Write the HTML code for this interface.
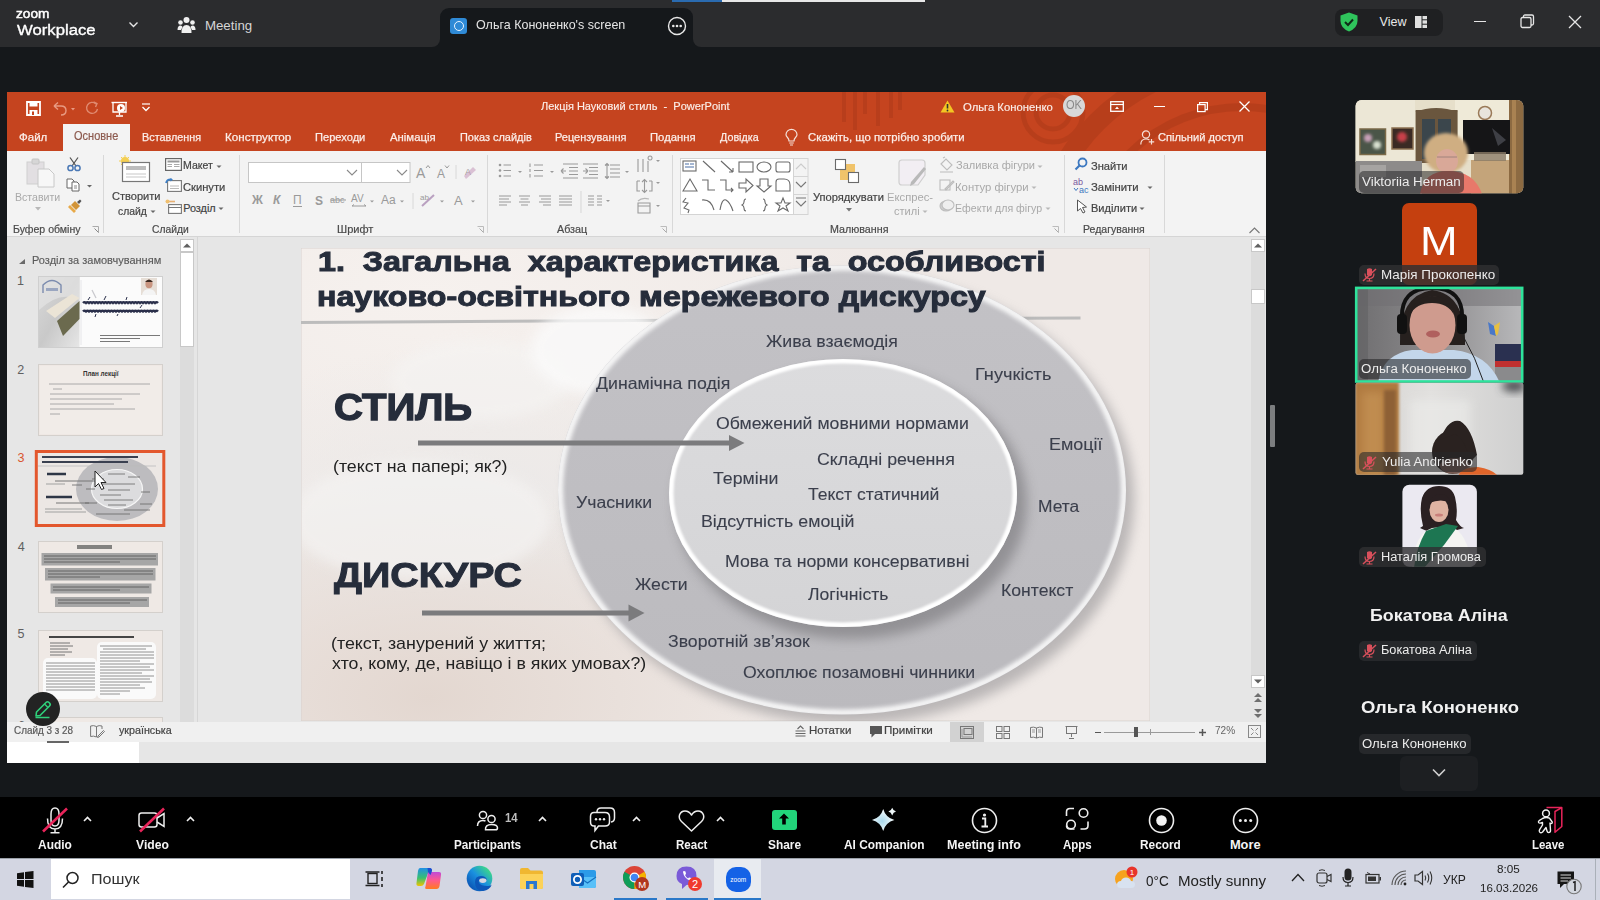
<!DOCTYPE html>
<html><head><meta charset="utf-8">
<style>
*{box-sizing:border-box;margin:0;padding:0}
html,body{width:1600px;height:900px;overflow:hidden;background:#15181b;font-family:"Liberation Sans",sans-serif;position:relative}
.a{position:absolute}
.t{position:absolute;white-space:nowrap;line-height:1;transform-origin:0 0}
svg{position:absolute;overflow:visible}
</style></head>
<body>
<div class="a" style="left:0;top:0;width:1600px;height:47px;background:#2b2c2e"></div>
<div class="a" style="left:672px;top:0;width:50px;height:2px;background:#2a6bb0"></div>
<div class="a" style="left:722px;top:0;width:203px;height:2px;background:#e8e8e8"></div>
<svg style="left:128px;top:20px" width="11" height="9" viewBox="0 0 11 9"><path d="M1.5 2.5 L5.5 6.5 L9.5 2.5" fill="none" stroke="#e6e6e6" stroke-width="1.4"/></svg>
<svg style="left:177px;top:16px" width="19" height="18" viewBox="0 0 19 18"><circle cx="9.5" cy="4" r="3" fill="#f0f0f0"/><circle cx="3.5" cy="6.5" r="2.3" fill="#f0f0f0"/><circle cx="15.5" cy="6.5" r="2.3" fill="#f0f0f0"/><path d="M4.5 17 Q4.5 9 9.5 9 Q14.5 9 14.5 17Z" fill="#f0f0f0"/><path d="M0.5 14 Q0.5 9.5 3.5 9.5 Q5 9.5 5.5 11 L4 14Z" fill="#f0f0f0"/><path d="M18.5 14 Q18.5 9.5 15.5 9.5 Q14 9.5 13.5 11 L15 14Z" fill="#f0f0f0"/></svg>
<div class="a" style="left:440px;top:8px;width:253px;height:39px;background:#15181b;border-radius:9px 9px 0 0"></div>
<div class="a" style="left:432px;top:39px;width:8px;height:8px;background:#15181b"></div>
<div class="a" style="left:424px;top:31px;width:16px;height:16px;background:#2b2c2e;border-radius:0 0 8px 0"></div>
<div class="a" style="left:693px;top:39px;width:8px;height:8px;background:#15181b"></div>
<div class="a" style="left:693px;top:31px;width:16px;height:16px;background:#2b2c2e;border-radius:0 0 0 8px"></div>
<div class="a" style="left:450px;top:18px;width:17px;height:16px;background:#2f8ad6;border-radius:3px"></div>
<div class="a" style="left:453.5px;top:21px;width:10px;height:10px;border:1.5px solid #eaf4ff;border-radius:50%"></div>
<svg style="left:667px;top:16px" width="20" height="20" viewBox="0 0 20 20"><circle cx="10" cy="10" r="8.5" fill="none" stroke="#e8e8e8" stroke-width="1.4"/><circle cx="6.3" cy="10" r="1.3" fill="#e8e8e8"/><circle cx="10" cy="10" r="1.3" fill="#e8e8e8"/><circle cx="13.7" cy="10" r="1.3" fill="#e8e8e8"/></svg>
<div class="a" style="left:1335px;top:9px;width:108px;height:27px;background:#1f2022;border-radius:8px"></div>
<svg style="left:1340px;top:12px" width="18" height="20" viewBox="0 0 18 20"><path d="M9 0.5 L17.5 3.5 L17.5 9 Q17.5 16 9 19.5 Q0.5 16 0.5 9 L0.5 3.5Z" fill="#2fc45c"/><path d="M5 10 L8 13 L13 7.5" fill="none" stroke="#0f2a18" stroke-width="2"/></svg>
<svg style="left:1415px;top:16px" width="12" height="12" viewBox="0 0 12 12"><rect x="0" y="0" width="6.5" height="12" fill="#e0e0e0"/><rect x="7.5" y="0" width="4.5" height="3.3" fill="#e0e0e0"/><rect x="7.5" y="4.3" width="4.5" height="3.4" fill="#e0e0e0"/><rect x="7.5" y="8.7" width="4.5" height="3.3" fill="#e0e0e0"/></svg>
<div class="a" style="left:1474px;top:21px;width:12px;height:1.3px;background:#e6e6e6"></div>
<svg style="left:1520px;top:14px" width="15" height="15" viewBox="0 0 15 15"><rect x="1" y="3.5" width="10" height="10" rx="1.5" fill="none" stroke="#e6e6e6" stroke-width="1.3"/><path d="M3.5 3.5 L3.5 2.5 Q3.5 1 5 1 L12 1 Q13.5 1 13.5 2.5 L13.5 9.5 Q13.5 11 12 11 L11 11" fill="none" stroke="#e6e6e6" stroke-width="1.3"/></svg>
<svg style="left:1568px;top:15px" width="14" height="14" viewBox="0 0 14 14"><path d="M1 1 L13 13 M13 1 L1 13" stroke="#e6e6e6" stroke-width="1.3"/></svg>

<div class="a" style="left:7px;top:92px;width:1259px;height:671px;background:#e6e6e6"></div>
<div class="a" style="left:7px;top:92px;width:1259px;height:59px;background:#c5441f;overflow:hidden">
 <svg style="left:0;top:0" width="1259" height="59" viewBox="0 0 1259 59">
  <g fill="none" stroke="#a83818" opacity="0.45">
   <path d="M837 0 V30 M848 0 V38 M858 0 V22 M871 0 V34 M884 0 V26 M893 0 V18" stroke-width="4"/>
   <circle cx="1046" cy="20" r="17" stroke-width="5"/><circle cx="1046" cy="20" r="30" stroke-width="5"/>
   <circle cx="1235" cy="175" r="205" stroke-width="20"/>
   <circle cx="1235" cy="175" r="160" stroke-width="8"/>
  </g>
 </svg>
</div>
<div class="a" style="left:63px;top:124px;width:67px;height:27px;background:#f3f3f3"></div>
<div class="a" style="left:7px;top:151px;width:1259px;height:85px;background:#f3f3f3"></div>
<div class="a" style="left:7px;top:236px;width:1259px;height:1px;background:#d5d5d5"></div>
<div class="a" style="left:7px;top:722px;width:1259px;height:20px;background:#f0f0f0"></div>
<div class="a" style="left:7px;top:742px;width:132px;height:21px;background:#ffffff"></div>
<div class="a" style="left:47px;top:741px;width:22px;height:2px;background:#666"></div>

<svg style="left:26px;top:101px" width="15" height="15" viewBox="0 0 15 15"><path d="M1 1 H14 V14 H1Z" fill="none" stroke="#fff" stroke-width="1.8"/><rect x="3.5" y="1" width="8" height="4.5" fill="#fff"/><rect x="3.5" y="9" width="8" height="5" fill="#fff"/><rect x="6" y="10.5" width="2" height="3.5" fill="#c5441f"/></svg>
<svg style="left:52px;top:101px" width="26" height="15" viewBox="0 0 26 15"><path d="M2 5 L6 1.5 M2 5 L6 8.5 M2 5 H9 Q14 5 14 9.5 Q14 14 9 14" fill="none" stroke="#e89a82" stroke-width="1.4"/><path d="M19 7 L23 7 L21 9.5Z" fill="#e89a82"/></svg>
<svg style="left:85px;top:101px" width="15" height="15" viewBox="0 0 15 15"><path d="M11 3 A5.5 5.5 0 1 0 12.5 8" fill="none" stroke="#e08a70" stroke-width="1.4"/><path d="M8.5 1 L12 2.5 L10.5 6" fill="none" stroke="#e08a70" stroke-width="1.4"/></svg>
<svg style="left:111px;top:101px" width="17" height="16" viewBox="0 0 17 16"><path d="M0.5 1.5 H16" stroke="#fff" stroke-width="1.4"/><path d="M2 1.5 V11 H15 V1.5" fill="none" stroke="#fff" stroke-width="1.3"/><circle cx="10" cy="7" r="4" fill="#fff"/><path d="M9 5 L12 7 L9 9Z" fill="#c5441f"/><path d="M8.5 11 V14 M5 15 H12" stroke="#fff" stroke-width="1.3"/></svg>
<svg style="left:141px;top:103px" width="10" height="9" viewBox="0 0 10 9"><path d="M1 1 H9" stroke="#fff" stroke-width="1.2"/><path d="M1.5 4 L5 7.5 L8.5 4" fill="none" stroke="#fff" stroke-width="1.3"/></svg>
<svg style="left:940px;top:100px" width="15" height="13" viewBox="0 0 15 13"><path d="M7.5 0.5 L14.5 12.5 H0.5Z" fill="#f3c623"/><path d="M7.5 4 V8.5" stroke="#333" stroke-width="1.6"/><circle cx="7.5" cy="10.5" r="0.9" fill="#333"/></svg>
<div class="a" style="left:1063px;top:95px;width:22px;height:22px;border-radius:50%;background:#d8d8d8"></div>
<svg style="left:1110px;top:101px" width="14" height="11" viewBox="0 0 14 11"><rect x="0.7" y="0.7" width="12.6" height="9.6" fill="none" stroke="#fff" stroke-width="1.3"/><path d="M0.7 3.5 H13.3" stroke="#fff" stroke-width="1.2"/><path d="M5 8 L7 5.5 L9 8Z" fill="#fff"/></svg>
<div class="a" style="left:1154px;top:106px;width:10.5px;height:1.2px;background:#fff"></div>
<svg style="left:1197px;top:101.5px" width="11" height="10" viewBox="0 0 11 10"><rect x="0.6" y="2.6" width="7.5" height="7" fill="none" stroke="#fff" stroke-width="1.2"/><path d="M2.6 2.6 V0.6 H10.4 V7.6 H8.1" fill="none" stroke="#fff" stroke-width="1.2"/></svg>
<svg style="left:1239px;top:101px" width="11" height="11" viewBox="0 0 11 11"><path d="M0.5 0.5 L10.5 10.5 M10.5 0.5 L0.5 10.5" stroke="#fff" stroke-width="1.3"/></svg>
<svg style="left:785px;top:130px" width="13" height="16" viewBox="0 0 13 16"><path d="M4 11 Q4 9 2.5 7.5 Q1 6 1 4.8 A5.5 5.5 0 0 1 12 4.8 Q12 6 10.5 7.5 Q9 9 9 11Z" fill="none" stroke="#f5e0d8" stroke-width="1.2"/><path d="M4.2 13 H8.8 M5 15 H8" stroke="#f5e0d8" stroke-width="1.2"/></svg>
<svg style="left:1140px;top:130px" width="15" height="15" viewBox="0 0 15 15"><circle cx="6" cy="4.5" r="3.6" fill="none" stroke="#f5e0d8" stroke-width="1.2"/><path d="M0.8 14.5 Q0.8 9 6 9 Q8 9 9.5 10" fill="none" stroke="#f5e0d8" stroke-width="1.2"/><path d="M11.5 9 V14.5 M8.8 11.8 H14.2" stroke="#f5e0d8" stroke-width="1.2"/></svg>

<div class="a" style="left:103px;top:155px;width:1px;height:78px;background:#d8d8d8"></div><div class="a" style="left:239px;top:155px;width:1px;height:78px;background:#d8d8d8"></div><div class="a" style="left:487px;top:155px;width:1px;height:78px;background:#d8d8d8"></div><div class="a" style="left:672px;top:155px;width:1px;height:78px;background:#d8d8d8"></div><div class="a" style="left:1064px;top:155px;width:1px;height:78px;background:#d8d8d8"></div><div class="a" style="left:1164px;top:155px;width:1px;height:78px;background:#d8d8d8"></div>

<svg style="left:26px;top:158px" width="30" height="30" viewBox="0 0 30 30"><rect x="1" y="4" width="17" height="22" fill="#e2dfe2" stroke="#cfcfcf"/><rect x="6" y="1" width="7" height="5" rx="1" fill="#d6d6d6" stroke="#c4c4c4"/><path d="M12 11 H23 L28 16 V29 H12Z" fill="#f7f7f7" stroke="#c8c8c8"/></svg>
<svg style="left:35px;top:207px" width="6" height="4" viewBox="0 0 6 4"><path d="M0 0 H6 L3 3.5Z" fill="#b8b8b8"/></svg>
<svg style="left:66px;top:157px" width="16" height="14" viewBox="0 0 16 14"><path d="M4 0.5 L10 9 M12 0.5 L6 9" stroke="#555" stroke-width="1.3"/><circle cx="4.5" cy="11" r="2.6" fill="none" stroke="#4a78b5" stroke-width="1.5"/><circle cx="11.5" cy="11" r="2.6" fill="none" stroke="#4a78b5" stroke-width="1.5"/></svg>
<svg style="left:66px;top:178px" width="28" height="14" viewBox="0 0 28 14"><path d="M1 1 H6 L8 3 V10 H1Z" fill="#fff" stroke="#666" stroke-width="1"/><path d="M6 4 H11 L13 6 V13 H6Z" fill="#fff" stroke="#666" stroke-width="1"/><path d="M8 8 H11 M8 10 H11" stroke="#888"/><path d="M21 7 H26 L23.5 9.5Z" fill="#666"/></svg>
<svg style="left:66px;top:199px" width="16" height="15" viewBox="0 0 16 15"><path d="M2 8 L8 14 L10 12 L4 6Z" fill="#e8a948"/><path d="M5 6 L9 2 L14 7 L10 11Z" fill="#d29437"/><path d="M11 3 L14 0.5 L15.5 2 L13 5" fill="#555"/></svg>
<svg style="left:92px;top:226px" width="8" height="8" viewBox="0 0 8 8"><path d="M0.5 0.5 H6.5 V6.5" fill="none" stroke="#aaa"/><path d="M2.5 2.5 L6.5 6.5" stroke="#888"/></svg>
<svg style="left:119px;top:155px" width="32" height="28" viewBox="0 0 32 28"><circle cx="6" cy="6" r="4" fill="#f4cf52"/><path d="M6 0 V12 M0 6 H12 M2 2 L10 10 M10 2 L2 10" stroke="#f4cf52" stroke-width="1"/><rect x="3.5" y="7.5" width="27" height="19" fill="#fff" stroke="#777" stroke-width="1.2"/><rect x="7" y="11" width="20" height="4" fill="#bdbdbd"/><path d="M7 19 H27 M7 22 H27" stroke="#c8c8c8" stroke-width="1.2"/></svg>
<svg style="left:165px;top:158px" width="17" height="13" viewBox="0 0 17 13"><rect x="0.6" y="0.6" width="15.8" height="11.8" fill="#fff" stroke="#666" stroke-width="1.2"/><rect x="2.5" y="2.5" width="12" height="2" fill="#999"/><path d="M2.5 6.5 H7 M2.5 8.5 H7 M9 6.5 H14.5 M9 8.5 H14.5" stroke="#aaa"/></svg>
<svg style="left:165px;top:178px" width="17" height="14" viewBox="0 0 17 14"><rect x="2.6" y="2.6" width="13.8" height="10.8" fill="#fff" stroke="#777" stroke-width="1.1"/><path d="M5 8 H14 M5 10.5 H14" stroke="#bbb"/><path d="M1 5 Q2 1 6.5 1.5" fill="none" stroke="#3d7fc7" stroke-width="1.8"/><path d="M5.5 0 L8 1.8 L5.5 3.5Z" fill="#3d7fc7"/></svg>
<svg style="left:165px;top:199px" width="17" height="15" viewBox="0 0 17 15"><path d="M1 2.5 H10" stroke="#e8b073" stroke-width="1.6"/><circle cx="2.5" cy="2.5" r="2" fill="#f0c070"/><rect x="3.6" y="5.6" width="12.8" height="8.8" fill="#fff" stroke="#777" stroke-width="1.1"/><path d="M3.6 8.5 H16.4" stroke="#777"/></svg>
<svg style="left:248px;top:161.5px" width="163" height="21" viewBox="0 0 163 21"><rect x="0.5" y="0.5" width="113" height="20" fill="#fff" stroke="#c6c6c6"/><rect x="113.5" y="0.5" width="48.5" height="20" fill="#fff" stroke="#c6c6c6"/><path d="M99 8 L104 13 L109 8" fill="none" stroke="#8a8a8a" stroke-width="1.1"/><path d="M149 8 L154 13 L159 8" fill="none" stroke="#8a8a8a" stroke-width="1.1"/></svg>
<svg style="left:416px;top:164px" width="62" height="16" viewBox="0 0 62 16"><text x="0" y="14" font-family="Liberation Sans" font-size="14" fill="#9a9a9a">A</text><path d="M10 4 L12 1.5 L14 4" fill="none" stroke="#9a9a9a" stroke-width="1"/><text x="21" y="14" font-family="Liberation Sans" font-size="12" fill="#9a9a9a">A</text><path d="M29 1.5 L31 4 L33 1.5" fill="none" stroke="#9a9a9a" stroke-width="1"/><path d="M40 1 V15" stroke="#d8d8d8"/><text x="49" y="11" font-family="Liberation Sans" font-size="9" fill="#9a9a9a">A</text><path d="M50 15 L60 6 L57 3 L48 12Z" fill="#c9a0c0" opacity="0.6"/></svg>
<svg style="left:250px;top:191px" width="230" height="20" viewBox="0 0 230 20"><text x="2" y="13" font-family="Liberation Sans" font-weight="bold" font-size="12" fill="#9a9a9a">Ж</text><text x="23" y="13" font-family="Liberation Sans" font-style="italic" font-weight="bold" font-size="12" fill="#9a9a9a">К</text><text x="43" y="13" font-family="Liberation Sans" font-size="12" fill="#9a9a9a">П</text><path d="M43 15.5 H52" stroke="#9a9a9a"/><text x="65" y="14" font-family="Liberation Sans" font-weight="bold" font-size="12" fill="#9a9a9a">S</text><text x="80" y="12" font-family="Liberation Sans" font-size="9" fill="#9a9a9a">abc</text><path d="M80 9 H96" stroke="#9a9a9a"/><text x="101" y="11" font-family="Liberation Sans" font-size="10" fill="#9a9a9a">AV</text><path d="M102 15 H116 M102 15 L104 13.5 M116 15 L114 13.5" stroke="#9a9a9a"/><path d="M120 9.5 H124 L122 11.5Z" fill="#9a9a9a"/><text x="131" y="13" font-family="Liberation Sans" font-size="12" fill="#9a9a9a">Aa</text><path d="M150 9.5 H154 L152 11.5Z" fill="#9a9a9a"/><path d="M163 2 V18" stroke="#d8d8d8"/><text x="170" y="9" font-family="Liberation Sans" font-size="8" fill="#9a9a9a">ab</text><path d="M172 15 L184 4" stroke="#b9a0c0" stroke-width="2"/><path d="M190 9.5 H194 L192 11.5Z" fill="#9a9a9a"/><text x="204" y="14" font-family="Liberation Sans" font-size="13" fill="#9a9a9a">A</text><path d="M221 9.5 H225 L223 11.5Z" fill="#9a9a9a"/></svg>
<svg style="left:497px;top:161px" width="175" height="57" viewBox="0 0 175 57" fill="#9a9a9a" stroke="#9a9a9a">
 <g stroke-width="1.1"><circle cx="3" cy="4" r="1.3" stroke="none"/><circle cx="3" cy="9.5" r="1.3" stroke="none"/><circle cx="3" cy="15" r="1.3" stroke="none"/><path d="M6.5 4 H14 M6.5 9.5 H14 M6.5 15 H14"/></g>
 <path d="M21 10 H25 L23 12Z" stroke="none"/>
 <g stroke-width="1.1"><path d="M33 2.5 V6 M33 8 V11 M33 13 V16.5 M37 4 H46 M37 9.5 H46 M37 15 H46"/></g>
 <path d="M53 10 H57 L55 12Z" stroke="none"/>
 <g stroke-width="1.1"><path d="M66 3 H81 M72 6.5 H81 M72 10 H81 M72 13.5 H81 M66 17 H81"/><path d="M69 10 H64 M64 10 L66.5 7.5 M64 10 L66.5 12.5"/></g>
 <g stroke-width="1.1"><path d="M86 3 H101 M92 6.5 H101 M92 10 H101 M92 13.5 H101 M86 17 H101"/><path d="M86 10 H91 M91 10 L88.5 7.5 M91 10 L88.5 12.5"/></g>
 <g stroke-width="1.1"><path d="M113 4 H123 M113 8 H123 M113 12 H123 M113 16 H123 M110 2.5 V17.5 M108 4.5 L110 2.5 L112 4.5 M108 15.5 L110 17.5 L112 15.5"/></g>
 <path d="M128 10 H132 L130 12Z" stroke="none"/>
 <g stroke-width="1.1"><path d="M2 35 H14 M2 38 H12 M2 41 H14 M2 44 H10"/><path d="M22 35 H33 M23.5 38 H31.5 M22 41 H33 M24 44 H31"/><path d="M42 35 H54 M44 38 H54 M42 41 H54 M46 44 H54"/><path d="M62 35 H75 M62 38 H75 M62 41 H75 M62 44 H75"/><path d="M84 30 V52" stroke="#d8d8d8"/><path d="M91 35 H97 M91 38 H97 M91 41 H97 M91 44 H97 M100 35 H105 M100 38 H105 M100 41 H105 M100 44 H105"/></g>
 <path d="M109 39 H113 L111 41Z" stroke="none"/>
 <g stroke-width="1.1" fill="none"><path d="M141 -2 V11 M146 -2 V11 M151 0 V11 M153 -1 A2 2 0 1 1 153.1 -1"/><path d="M140 20 V30 H143 M140 20 H143 M155 20 V30 H152 M155 20 H152 M147.5 19 V31 M145 21 L147.5 18.5 L150 21 M145 29 L147.5 31.5 L150 29"/><path d="M141 42 H153 V52 H141Z M141 45 H153"/><path d="M141 40 Q145 36 152 38" stroke="#b8b8b8"/></g>
 <path d="M159 -1 H163 L161 1Z M159 21 H163 L161 23Z M159 44 H163 L161 46Z" stroke="none"/>
</svg>
<svg style="left:660px;top:226px" width="8" height="8" viewBox="0 0 8 8"><path d="M0.5 0.5 H6.5 V6.5" fill="none" stroke="#bbb"/><path d="M2.5 2.5 L6.5 6.5" stroke="#aaa"/></svg>
<svg style="left:477px;top:226px" width="8" height="8" viewBox="0 0 8 8"><path d="M0.5 0.5 H6.5 V6.5" fill="none" stroke="#bbb"/><path d="M2.5 2.5 L6.5 6.5" stroke="#aaa"/></svg>
<svg style="left:1052px;top:226px" width="8" height="8" viewBox="0 0 8 8"><path d="M0.5 0.5 H6.5 V6.5" fill="none" stroke="#bbb"/><path d="M2.5 2.5 L6.5 6.5" stroke="#aaa"/></svg>

<svg style="left:680px;top:157.5px" width="129" height="57" viewBox="0 0 129 57">
<rect x="0.5" y="0.5" width="113" height="56" fill="#fff" stroke="#d4d4d4"/>
<rect x="113.5" y="0.5" width="14.5" height="56" fill="#f3f3f3" stroke="#d4d4d4"/>
<path d="M113.5 18.5 H128 M113.5 36.5 H128" stroke="#d4d4d4"/>
<path d="M116 11 L121 6 L126 11" fill="none" stroke="#ccc" stroke-width="1.1"/>
<path d="M116 24 L121 29 L126 24" fill="none" stroke="#777" stroke-width="1.1"/>
<path d="M116 40 H126 M116 43 L121 48 L126 43" fill="none" stroke="#777" stroke-width="1.1"/>
<g fill="none" stroke="#6a6a6a" stroke-width="1.1">
<rect x="3" y="3" width="13" height="10"/><path d="M5 6 H9 M10 6 H14 M5 9 H14" stroke="#4a6fa5"/>
<path d="M23 3 L35 14"/><path d="M41 3 L53 14 M53 14 V10 M53 14 H49"/>
<rect x="59" y="4" width="14" height="10"/><ellipse cx="84" cy="9" rx="7" ry="5"/><rect x="96" y="4" width="14" height="10" rx="2"/>
<path d="M3 33 L10 21 L17 33Z"/><path d="M22 22 H28 V32 H35"/><path d="M40 22 H46 V32 H53 M51 30 L53 32 L51 34"/>
<path d="M59 25 H66 V21 L73 27.5 L66 34 V30 H59Z"/><path d="M80 21 H88 V28 H91 L84 34 L77 28 H80Z"/><path d="M96 33 V24 Q96 21 99 21 H104 Q110 21 110 27 V33Z"/>
<path d="M6 40 L3 44 L8 45 L4 50 L9 52 L8 55"/><path d="M22 42 Q31 41 34 52"/><path d="M40 52 Q42 40 46 42 Q50 44 53 53"/>
<path d="M66 41 Q64 41 64 44 Q64 46 62 47 Q64 48 64 50 Q64 53 66 53"/><path d="M83 41 Q85 41 85 44 Q85 46 87 47 Q85 48 85 50 Q85 53 83 53"/>
<path d="M103 40 L105 45 L110 45 L106 48 L108 53 L103 50 L98 53 L100 48 L96 45 L101 45Z"/>
</g></svg>
<svg style="left:834px;top:158px" width="27" height="27" viewBox="0 0 27 27"><rect x="11" y="6" width="10" height="10" fill="#f0c36a"/><rect x="6" y="12" width="10" height="10" fill="#f0c36a"/><rect x="1.5" y="1.5" width="10" height="10" fill="#fff" stroke="#6a6a6a" stroke-width="1.1"/><rect x="14.5" y="14.5" width="10" height="10" fill="#fff" stroke="#6a6a6a" stroke-width="1.1"/></svg>
<svg style="left:845.5px;top:208px" width="6" height="4" viewBox="0 0 6 4"><path d="M0 0 H6 L3 3.5Z" fill="#777"/></svg>
<svg style="left:898px;top:159px" width="30" height="28" viewBox="0 0 30 28"><path d="M3 1 H24 Q27 1 27 4 V16 L20 26 H4 Q1 26 1 23 V4 Q1 1 4 1Z" fill="#f2eef3" stroke="#cfcfcf" stroke-width="1.2"/><path d="M28 10 L16 25 L12 27 L13 23 L26 8Z" fill="#b9b9b9"/></svg>
<svg style="left:939px;top:157px" width="16" height="57" viewBox="0 0 16 57" fill="none" stroke="#bdbdbd" stroke-width="1.1"><path d="M2 7 L7 2 L13 8 L8 13Z"/><path d="M4 1 L6 0"/><path d="M1 15 H14" stroke="#d7d7d7" stroke-width="2"/><rect x="1" y="23" width="10" height="10"/><path d="M6 32 L14 24 L15 25 L7 33Z"/><ellipse cx="7" cy="49" rx="6" ry="5" fill="#cfcfcf"/><ellipse cx="9" cy="48" rx="6" ry="5" fill="#eee"/></svg>
<svg style="left:1074px;top:157px" width="14" height="14" viewBox="0 0 14 14"><circle cx="8.5" cy="5.5" r="4" fill="none" stroke="#3c78c0" stroke-width="1.8"/><path d="M6 8 L1.5 12.5" stroke="#3c78c0" stroke-width="2.2"/></svg>
<svg style="left:1073px;top:177px" width="17" height="16" viewBox="0 0 17 16"><text x="0" y="8" font-family="Liberation Sans" font-size="9" fill="#7a5aa0">ab</text><text x="6" y="15.5" font-family="Liberation Sans" font-size="9" fill="#3c78c0">ac</text><path d="M1 11 L3 13.5 L5 11" fill="none" stroke="#3c78c0" stroke-width="1"/></svg>
<svg style="left:1076px;top:199px" width="12" height="15" viewBox="0 0 12 15"><path d="M1.5 1 V12 L4.5 9.5 L7 14 L9 13 L6.5 8.5 L10.5 8Z" fill="#fff" stroke="#555" stroke-width="1"/></svg>
<svg style="left:1249px;top:227px" width="11" height="7" viewBox="0 0 11 7"><path d="M0.5 6 L5.5 1 L10.5 6" fill="none" stroke="#777" stroke-width="1.1"/></svg>

<div class="a" style="left:197px;top:237px;width:1px;height:485px;background:#d6d6d6"></div>
<div class="a" style="left:180px;top:239px;width:13.5px;height:483px;background:#dcdcdc"></div>
<div class="a" style="left:180px;top:239px;width:13.5px;height:13px;background:#fff;border:1px solid #c8c8c8"></div>
<svg style="left:183px;top:243px" width="8" height="5" viewBox="0 0 8 5"><path d="M0 4.5 L4 0.5 L8 4.5Z" fill="#606060"/></svg>
<div class="a" style="left:180px;top:252px;width:13.5px;height:95px;background:#fff;border:1px solid #c8c8c8"></div>
<div class="a" style="left:1251px;top:239px;width:13.5px;height:483px;background:#dcdcdc"></div>
<div class="a" style="left:1251px;top:239px;width:13.5px;height:13px;background:#fff;border:1px solid #c8c8c8"></div>
<svg style="left:1254px;top:243px" width="8" height="5" viewBox="0 0 8 5"><path d="M0 4.5 L4 0.5 L8 4.5Z" fill="#606060"/></svg>
<div class="a" style="left:1251px;top:288.5px;width:13.5px;height:15px;background:#fff;border:1px solid #c8c8c8"></div>
<div class="a" style="left:1251px;top:675px;width:13.5px;height:13px;background:#fff;border:1px solid #c8c8c8"></div>
<svg style="left:1254px;top:679px" width="8" height="5" viewBox="0 0 8 5"><path d="M0 0.5 L4 4.5 L8 0.5Z" fill="#606060"/></svg>
<div class="a" style="left:1251px;top:688px;width:13.5px;height:34px;background:#e6e6e6"></div>
<svg style="left:1254px;top:692px" width="8" height="11" viewBox="0 0 8 11"><path d="M0 5 L4 1 L8 5Z M0 10 L4 6 L8 10Z" fill="#707070"/></svg>
<svg style="left:1254px;top:708px" width="8" height="11" viewBox="0 0 8 11"><path d="M0 1 L4 5 L8 1Z M0 6 L4 10 L8 6Z" fill="#707070"/></svg>
<svg style="left:19px;top:258.5px" width="6" height="5" viewBox="0 0 6 5"><path d="M6 0 V5 H0Z" fill="#6a6a6a"/></svg>

<svg style="left:301px;top:248px;overflow:hidden" width="849" height="473" viewBox="301 248 849 473">
<defs>
 <radialGradient id="bg1" cx="0.15" cy="0.1" r="0.6"><stop offset="0" stop-color="#f6f1ee"/><stop offset="1" stop-color="#f6f1ee" stop-opacity="0"/></radialGradient>
 <radialGradient id="bg2" cx="0.2" cy="0.55" r="0.35"><stop offset="0" stop-color="#ebe9e8"/><stop offset="1" stop-color="#ebe9e8" stop-opacity="0"/></radialGradient>
 <radialGradient id="bg3" cx="0.15" cy="0.95" r="0.45"><stop offset="0" stop-color="#e3d7d0"/><stop offset="1" stop-color="#e3d7d0" stop-opacity="0"/></radialGradient>
 <linearGradient id="og" x1="0" y1="0" x2="0" y2="1"><stop offset="0" stop-color="#c3c2c6"/><stop offset="1" stop-color="#bbbabe"/></linearGradient>
 <linearGradient id="ig" x1="0" y1="0" x2="0" y2="1"><stop offset="0" stop-color="#dcdcde"/><stop offset="1" stop-color="#d4d4d6"/></linearGradient>
 <linearGradient id="rimO" x1="0" y1="0" x2="1" y2="1"><stop offset="0" stop-color="#ffffff"/><stop offset="0.5" stop-color="#f4f4f5"/><stop offset="1" stop-color="#dcdcde"/></linearGradient>
 <filter id="blur6" x="-20%" y="-20%" width="140%" height="140%"><feGaussianBlur stdDeviation="6"/></filter>
 <filter id="blur3" x="-20%" y="-20%" width="140%" height="140%"><feGaussianBlur stdDeviation="3"/></filter>
 <filter id="blur1"><feGaussianBlur stdDeviation="1"/></filter>
 <clipPath id="oclip"><ellipse cx="842" cy="490" rx="281.5" ry="222"/></clipPath><clipPath id="oclip2"><ellipse cx="842" cy="490" rx="284" ry="224.5"/></clipPath><clipPath id="iclip"><ellipse cx="843" cy="493" rx="174" ry="134"/></clipPath><filter id="blur2" x="-20%" y="-20%" width="140%" height="140%"><feGaussianBlur stdDeviation="2"/></filter>
</defs>
<rect x="301" y="248" width="849" height="473" fill="#efe9e6"/>
<rect x="301" y="248" width="849" height="473" fill="url(#bg1)"/>
<rect x="301" y="248" width="849" height="473" fill="url(#bg2)"/>
<rect x="301" y="248" width="849" height="473" fill="url(#bg3)"/>
<ellipse cx="420" cy="520" rx="130" ry="60" fill="#f4f3f2" opacity="0.7" filter="url(#blur6)"/>
<ellipse cx="480" cy="380" rx="90" ry="40" fill="#f5f4f3" opacity="0.6" filter="url(#blur6)"/>
<rect x="301" y="248" width="849" height="473" fill="none" stroke="#d8d2cf" stroke-width="1"/>
<path d="M301 321 L1080.5 316.5 L1080.5 319.5 L301 324Z" fill="#bcbcbc"/>
<ellipse cx="600" cy="350" rx="70" ry="45" fill="#fafafa" opacity="0.8" filter="url(#blur6)"/>
<!-- outer ellipse shadow -->
<ellipse cx="850" cy="499" rx="284" ry="225" fill="#8f8d90" opacity="0.55" filter="url(#blur6)"/>
<ellipse cx="842" cy="490" rx="284" ry="224.5" fill="url(#og)"/>
<g clip-path="url(#oclip2)"><ellipse cx="842" cy="490" rx="282.5" ry="223" fill="none" stroke="#fbfbfb" stroke-width="7" opacity="0.95" filter="url(#blur2)"/></g>
<!-- inner ellipse shadow inside outer -->
<g clip-path="url(#oclip)"><ellipse cx="851" cy="503" rx="176" ry="136" fill="#6f6e72" opacity="0.55" filter="url(#blur6)"/></g>
<ellipse cx="843" cy="493" rx="174" ry="134" fill="url(#ig)"/>
<g clip-path="url(#iclip)"><ellipse cx="843" cy="493" rx="172.5" ry="132.5" fill="none" stroke="#ffffff" stroke-width="6" filter="url(#blur1)"/></g>
<!-- arrows -->
<rect x="418" y="440.5" width="312" height="5" fill="#7b7b7d"/>
<path d="M729 435 L744.5 443 L729 451Z" fill="#7b7b7d"/>
<rect x="422" y="610.5" width="208" height="5" fill="#7b7b7d"/>
<path d="M628.5 604.5 L644.5 613 L628.5 621.5Z" fill="#7b7b7d"/>
</svg>
<svg style="left:0;top:0" width="200" height="730" viewBox="0 0 200 730">
<defs>
 <linearGradient id="t1g" x1="0" y1="0" x2="1" y2="1"><stop offset="0" stop-color="#d9d9d9"/><stop offset="0.5" stop-color="#c9c9c9"/><stop offset="1" stop-color="#e6e6e6"/></linearGradient>
 <clipPath id="thumbclip"><rect x="0" y="237" width="180" height="485"/></clipPath>
</defs>
<g clip-path="url(#thumbclip)">
<!-- thumb1 -->
<rect x="38.5" y="276.5" width="124" height="71" fill="#fbfbfb" stroke="#cfcfcf"/>
<rect x="39" y="277" width="40.5" height="70" fill="url(#t1g)"/>
<path d="M39 277 H79.5 V300 Q60 290 39 310Z" fill="#e4e4e4" opacity="0.7"/>
<path d="M46 311 L72 294 L79.5 298 L55 318Z" fill="#ebe4d6"/>
<path d="M57 321 L79.5 301 V319 L63 336Z" fill="#6b6a4e"/>
<path d="M43 293 V285 Q52 276 61 285 V293" fill="none" stroke="#7c8cae" stroke-width="1.4"/><path d="M46 291 H58 V288 H46Z" fill="#9aa6c0"/>
<path d="M81 280 V345" stroke="#e2e2e6" stroke-width="0.8"/>
<path d="M92 290 L96 298" stroke="#c8c8cc" stroke-width="1.2"/>
<rect x="141" y="278" width="16" height="17" fill="#e6ded6"/><ellipse cx="149" cy="284" rx="3.6" ry="4.2" fill="#c99580"/><path d="M145 282 Q149 277 153 282" fill="#3a2a22"/><path d="M142 295 Q143 289 149 289 Q155 289 156 295Z" fill="#f4f4f4"/>
<path d="M83 303 q1.5 -1.6 3 0 q1.5 -1.6 3 0 q1.5 -1.6 3 0 q1.5 -1.6 3 0 q1.5 -1.6 3 0 q1.5 -1.6 3 0 q1.5 -1.6 3 0 q1.5 -1.6 3 0 q1.5 -1.6 3 0 q1.5 -1.6 3 0 q1.5 -1.6 3 0 q1.5 -1.6 3 0 q1.5 -1.6 3 0 q1.5 -1.6 3 0 q1.5 -1.6 3 0 q1.5 -1.6 3 0 q1.5 -1.6 3 0 q1.5 -1.6 3 0 q1.5 -1.6 3 0 q1.5 -1.6 3 0 q1.5 -1.6 3 0 q1.5 -1.6 3 0 q1.5 -1.6 3 0 q1.5 -1.6 3 0 q1.5 -1.6 3 0" fill="none" stroke="#2a2f4a" stroke-width="2.4"/>
<path d="M83 311.5 q1.5 -1.6 3 0 q1.5 -1.6 3 0 q1.5 -1.6 3 0 q1.5 -1.6 3 0 q1.5 -1.6 3 0 q1.5 -1.6 3 0 q1.5 -1.6 3 0 q1.5 -1.6 3 0 q1.5 -1.6 3 0 q1.5 -1.6 3 0 q1.5 -1.6 3 0 q1.5 -1.6 3 0 q1.5 -1.6 3 0 q1.5 -1.6 3 0 q1.5 -1.6 3 0 q1.5 -1.6 3 0 q1.5 -1.6 3 0 q1.5 -1.6 3 0 q1.5 -1.6 3 0 q1.5 -1.6 3 0 q1.5 -1.6 3 0 q1.5 -1.6 3 0 q1.5 -1.6 3 0 q1.5 -1.6 3 0 q1.5 -1.6 3 0" fill="none" stroke="#2a2f4a" stroke-width="2.4"/>
<path d="M88 300 L90 297 M104 300 L106 296 M126 300 L127 297 M140 308 L142 305 M96 314 L95 317 M118 314 L117 316" stroke="#2a2f4a" stroke-width="1"/>
<path d="M100 335.5 H160 M100 338.5 H140 M100 341.5 H130" stroke="#6a6a6a" stroke-width="0.9"/>
<!-- thumb2 -->
<rect x="38.5" y="364.5" width="124" height="71" fill="#efe8e4" stroke="#d4d0cc"/>
<rect x="40" y="366" width="121" height="68" fill="#f1ece8"/>

<text x="83" y="376" font-family="Liberation Sans" font-weight="bold" font-size="6.3" fill="#333">План лекції</text>
<g stroke="#9a9a9a" stroke-width="0.8"><path d="M49 384 H150 M53 389 H62 M50 394 H140 M50 399 H122 M50 404 H114 M50 409 H135 M50 414 H60"/></g>
<!-- thumb3 selected -->
<rect x="36.3" y="451.5" width="127.5" height="74" fill="#ece7e4" stroke="#e3572d" stroke-width="3"/>
<ellipse cx="117" cy="489" rx="41" ry="32" fill="#bdbcbf"/>
<ellipse cx="117" cy="489" rx="25.5" ry="19.5" fill="#dcdcde" stroke="#f6f6f6" stroke-width="1.2"/>
<path d="M42 457 H138 M42 462 H128" stroke="#3a4050" stroke-width="2.2"/>
<path d="M38 466 H156" stroke="#bbb" stroke-width="0.8"/>
<path d="M47 474 H66 M46 497 H72" stroke="#2e3646" stroke-width="2.6"/>
<path d="M55 481 H102 M56 503 H89" stroke="#777" stroke-width="1"/>
<path d="M46 484 H65 M45 509 H82 M45 512 H86" stroke="#999" stroke-width="0.9"/>
<g stroke="#666" stroke-width="0.8"><path d="M108 474 H125 M92 479 H104 M128 477 H140 M101 484 H135 M108 490 H130 M100 495 H121 M104 500 H133 M108 505 H126 M124 510 H150 M86 489 H95 M141 492 H150 M72 485 H82 M85 503 H97 M140 504 H152 M96 514 H130"/></g>
<path d="M95 471 V487 L98.5 483.5 L101.5 489.5 L104 488.5 L101 482.5 L106 482.5Z" fill="#fff" stroke="#222" stroke-width="1"/>
<!-- thumb4 -->
<rect x="38.5" y="541.5" width="124" height="71" fill="#efe9e5" stroke="#d4d0cc"/>
<rect x="77" y="545" width="35" height="4" fill="#555" opacity="0.7"/>
<rect x="41.5" y="553" width="116.5" height="12.5" fill="#a6a6a6"/>
<rect x="45" y="568" width="110.5" height="12.5" fill="#a6a6a6"/>
<rect x="50.5" y="583.5" width="101" height="10" fill="#a6a6a6"/>
<rect x="55" y="597" width="94" height="10" fill="#a6a6a6"/>
<g stroke="#4a4a4a" stroke-width="0.9" opacity="0.8"><path d="M44 556 H156 M44 559 H156 M44 562 H120 M48 571 H153 M48 574 H153 M48 577 H100 M53 587 H149 M53 590 H120 M58 600 H147 M58 603 H130"/></g>
<!-- thumb5 -->
<rect x="38.5" y="630.5" width="124" height="71" fill="#efe9e5" stroke="#d4d0cc"/>
<path d="M49 637 H134" stroke="#444" stroke-width="1.8"/>
<g stroke="#666" stroke-width="0.9"><path d="M50 643 H70 M50 646 H73 M50 649 H68 M50 652 H72 M50 655 H65"/></g>
<rect x="43" y="658" width="54" height="41" rx="5" fill="#fafafa"/>
<rect x="97" y="642" width="59" height="57" rx="5" fill="#fafafa"/>
<g stroke="#777" stroke-width="0.8"><path d="M46 663 H95 M46 666 H95 M46 669 H95 M46 672 H95 M46 675 H95 M46 678 H95 M46 681 H95 M46 684 H95 M46 687 H95 M46 690 H95 M100 646 H152 M103 649 H146 M100 652 H154 M100 655 H154 M100 658 H154 M100 661 H140 M100 664 H154 M100 667 H150 M100 670 H154 M100 673 H142 M100 676 H154 M100 679 H150 M100 682 H152 M100 685 H140 M100 688 H145 M100 691 H130 M100 694 H120"/></g>
<rect x="38.5" y="717.5" width="124" height="10" fill="#efe9e5" stroke="#d4d0cc"/>
<text x="18" y="730" font-family="Liberation Sans" font-size="12.5" fill="#666">6</text>
</g>
</svg>
<div class="a" style="left:25.5px;top:691.5px;width:34px;height:34px;border-radius:50%;background:#232323"></div>
<svg style="left:31px;top:697px" width="24" height="24" viewBox="0 0 24 24"><path d="M5.5 15 L15 5.5 Q16.5 4 18 5.5 L18.5 6 Q20 7.5 18.5 9 L9 18.5 L5 19Z" fill="none" stroke="#2fd07a" stroke-width="1.6" stroke-linejoin="round"/><path d="M13.5 7 L17 10.5" stroke="#2fd07a" stroke-width="1.4"/><path d="M4.5 20.5 H18.5" stroke="#2fd07a" stroke-width="1.5"/></svg>

<svg style="left:90px;top:724.5px" width="15" height="13" viewBox="0 0 15 13"><path d="M0.6 1 Q3.5 0 6.5 1.5 V12 Q3.5 10.5 0.6 11.5Z M6.5 1.5 Q9 0 12 1 V4" fill="none" stroke="#777" stroke-width="1"/><path d="M8 11 L13.5 5.5 L14.5 6.5 L9 12 L7.5 12.5Z" fill="none" stroke="#777" stroke-width="1"/></svg>
<svg style="left:795px;top:725px" width="11" height="13" viewBox="0 0 11 13"><path d="M2.5 4 L5.5 1 L8.5 4" fill="none" stroke="#666" stroke-width="1.1"/><path d="M0.5 6 H10.5 M0.5 8.5 H10.5 M0.5 11 H10.5" stroke="#666" stroke-width="1.1"/></svg>
<svg style="left:869px;top:725px" width="14" height="14" viewBox="0 0 14 14"><path d="M1 1 H13 V9 H6 L2.5 12.5 V9 H1Z" fill="#555"/></svg>
<div class="a" style="left:950px;top:722px;width:34px;height:20px;background:#d2d2d2"></div>
<svg style="left:960px;top:725.5px" width="14" height="13" viewBox="0 0 14 13"><rect x="0.5" y="0.5" width="13" height="12" fill="none" stroke="#777"/><rect x="4" y="2.5" width="8" height="6" fill="none" stroke="#777"/><path d="M2 3 V11 H12" fill="none" stroke="#999"/></svg>
<svg style="left:995.5px;top:725.5px" width="14" height="13" viewBox="0 0 14 13"><rect x="0.5" y="0.5" width="5.5" height="5" fill="none" stroke="#777"/><rect x="8" y="0.5" width="5.5" height="5" fill="none" stroke="#777"/><rect x="0.5" y="7.5" width="5.5" height="5" fill="none" stroke="#777"/><rect x="8" y="7.5" width="5.5" height="5" fill="none" stroke="#777"/></svg>
<svg style="left:1030px;top:725.5px" width="13" height="13" viewBox="0 0 13 13"><path d="M0.5 1.5 Q3.5 0.5 6.5 2 V12 Q3.5 10.5 0.5 11.5Z M6.5 2 Q9.5 0.5 12.5 1.5 V11.5 Q9.5 10.5 6.5 12" fill="none" stroke="#777"/><path d="M2 4 H5 M2 6 H5 M8 4 H11 M8 6 H11" stroke="#999"/></svg>
<svg style="left:1065px;top:725.5px" width="13" height="13" viewBox="0 0 13 13"><path d="M0.5 0.5 H12.5" stroke="#777"/><rect x="1.5" y="0.5" width="10" height="7" fill="none" stroke="#777"/><path d="M6.5 7.5 V11 M4 12.5 H9" stroke="#777"/></svg>
<div class="a" style="left:1095px;top:731.5px;width:5.5px;height:1.5px;background:#555"></div>
<div class="a" style="left:1104px;top:731.5px;width:91px;height:1px;background:#9a9a9a"></div>
<div class="a" style="left:1150px;top:729px;width:1px;height:6px;background:#9a9a9a"></div>
<div class="a" style="left:1134px;top:727px;width:4px;height:10px;background:#555"></div>
<svg style="left:1198.5px;top:728.5px" width="7" height="7" viewBox="0 0 7 7"><path d="M3.5 0 V7 M0 3.5 H7" stroke="#555" stroke-width="1.5"/></svg>
<svg style="left:1247.5px;top:725px" width="13" height="13" viewBox="0 0 13 13"><rect x="0.5" y="0.5" width="12" height="12" fill="none" stroke="#888"/><path d="M3 3 L5.5 5.5 M10 3 L7.5 5.5 M3 10 L5.5 7.5 M10 10 L7.5 7.5" stroke="#888"/></svg>

<svg style="left:1355px;top:100px" width="169" height="94" viewBox="1355 100 169 94">
<defs><clipPath id="c1"><rect x="1355.6" y="100" width="167.7" height="93.3" rx="6"/></clipPath>
<filter id="gb2" x="-50%" y="-50%" width="200%" height="200%"><feGaussianBlur stdDeviation="1.5"/></filter><filter id="gb4" x="-50%" y="-50%" width="200%" height="200%"><feGaussianBlur stdDeviation="4"/></filter></defs>
<g clip-path="url(#c1)">
<rect x="1355" y="100" width="169" height="94" fill="#e6dfca"/>
<rect x="1355" y="100" width="60" height="62" fill="#ece7d6"/>
<rect x="1455" y="100" width="55" height="60" fill="#efead8"/>
<rect x="1509" y="100" width="15" height="94" fill="#8c6a42"/>
<rect x="1512" y="100" width="4" height="94" fill="#a98252"/>
<rect x="1360" y="129" width="25.5" height="25.5" fill="#4a5548" stroke="#7a6a48" stroke-width="1.5"/>
<circle cx="1368" cy="138" r="4" fill="#c8a0b8" filter="url(#gb2)"/><circle cx="1377" cy="145" r="4" fill="#d8e0d0" filter="url(#gb2)"/>
<rect x="1392" y="128" width="21" height="21" fill="#3a2a24" stroke="#8a7050" stroke-width="1.5"/>
<circle cx="1402" cy="137" r="5" fill="#c84048" filter="url(#gb2)"/>
<rect x="1415.6" y="110" width="42" height="53" fill="#6a563e"/>
<path d="M1415 112 Q1436 104 1458 112" fill="#6a563e"/>
<rect x="1422" y="119" width="13" height="40" fill="#3b464c"/><rect x="1438" y="119" width="13" height="40" fill="#3b464c"/>
<circle cx="1485" cy="113" r="6.5" fill="#e8e4dc" stroke="#9a7a58" stroke-width="1.5"/>
<rect x="1463" y="120" width="47" height="34" fill="#151517"/>
<path d="M1492 128 L1506 140 L1498 146Z" fill="#5a5c64" opacity="0.6"/>
<rect x="1356" y="161" width="66" height="33" fill="#8d8b8a"/>
<rect x="1360" y="165" width="26" height="12" fill="#a6a4a2"/>
<rect x="1471" y="160" width="38" height="34" fill="#c4a47a"/>
<rect x="1474" y="152" width="32" height="9" fill="#8a7a66" opacity="0.8"/>
<ellipse cx="1446" cy="153" rx="22" ry="20" fill="#cfae82" filter="url(#gb2)"/>
<ellipse cx="1447" cy="161" rx="11" ry="12" fill="#d9a898"/>
<path d="M1437 157 H1457" stroke="#7a6a6a" stroke-width="1" opacity="0.6"/>
<path d="M1420 194 Q1424 171 1448 171 Q1474 171 1482 194Z" fill="#e8786a"/>
</g></svg>
<div class="a" style="left:1359px;top:171px;width:105.4px;height:21.7px;border-radius:5px;background:rgba(40,40,42,0.55)"></div>
<div class="a" style="left:1402px;top:203px;width:75px;height:82px;border-radius:7px;background:#c5400f"></div>
<div class="a" style="left:1359.2px;top:264.7px;width:140px;height:20.1px;border-radius:5px;background:rgba(48,48,50,0.82)"></div>
<svg style="left:1362px;top:268px" width="15" height="14" viewBox="0 0 15 14"><path d="M5 1 Q7.5 -0.5 10 1 V7 Q7.5 9.5 5 7Z" fill="#d9505c"/><path d="M3 5.5 Q3 10.5 7.5 10.5 Q12 10.5 12 5.5 M7.5 10.5 V13 M4.5 13 H10.5" fill="none" stroke="#d9505c" stroke-width="1.2"/><path d="M1 13 L14 1" stroke="#d9505c" stroke-width="1.5"/></svg>
<svg style="left:1355px;top:286px" width="169" height="97" viewBox="1355 286 169 97">
<defs><clipPath id="c3"><rect x="1356" y="287" width="167" height="95"/></clipPath>
<linearGradient id="w3" x1="0" y1="0" x2="1" y2="0"><stop offset="0" stop-color="#6f6e70"/><stop offset="0.45" stop-color="#8a898b"/><stop offset="1" stop-color="#b9b9bb"/></linearGradient></defs>
<g clip-path="url(#c3)">
<rect x="1355" y="286" width="169" height="97" fill="url(#w3)"/>
<rect x="1355" y="286" width="169" height="20" fill="#6f6e71" opacity="0.5"/>
<rect x="1495" y="344" width="28" height="38" fill="#2a3050"/><rect x="1495" y="361" width="28" height="6" fill="#c03030"/><rect x="1495" y="367" width="28" height="15" fill="#8a8a8c"/>
<path d="M1488 322 L1494 326 L1496 336 L1490 334Z" fill="#4a78c8"/><path d="M1494 326 L1500 322 L1498 334 L1496 336Z" fill="#e8c040"/>
<rect x="1356" y="287" width="12" height="95" fill="#5e5d60" opacity="0.5"/>
<path d="M1400 345 Q1398 296 1432 290 Q1466 294 1465 345 Z" fill="#26201e"/>
<path d="M1378 383 Q1382 354 1412 350 L1454 350 Q1488 354 1500 383Z" fill="#c3d6ea"/>
<ellipse cx="1432.5" cy="325" rx="23" ry="28.5" fill="#cf9b8e"/>
<path d="M1410 315 Q1414 296 1432 296 Q1450 296 1454 315 Q1448 303 1432 303 Q1416 303 1410 315Z" fill="#26201e"/>
<ellipse cx="1433" cy="334" rx="7" ry="3.5" fill="#b0605e"/>
<path d="M1402 320 Q1400 288 1432 288 Q1464 288 1462 320" fill="none" stroke="#111" stroke-width="4"/>
<rect x="1397" y="314" width="10" height="20" rx="4" fill="#111"/><rect x="1457" y="314" width="10" height="20" rx="4" fill="#111"/>
<path d="M1462 334 Q1476 358 1484 383" fill="none" stroke="#222" stroke-width="1"/>
</g>
<rect x="1356.2" y="287.9" width="166" height="93.6" fill="none" stroke="#2ee39b" stroke-width="2.6"/>
</svg>
<div class="a" style="left:1359px;top:359px;width:112px;height:20px;border-radius:5px;background:rgba(40,40,42,0.6)"></div>
<svg style="left:1355px;top:382px" width="169" height="94" viewBox="1355 382 169 94">
<defs><clipPath id="c4"><rect x="1355.6" y="382.7" width="167.7" height="92" rx="2"/></clipPath>
<linearGradient id="w4" x1="0" y1="0" x2="1" y2="0"><stop offset="0" stop-color="#d4d2d0"/><stop offset="0.45" stop-color="#e2e1df"/><stop offset="1" stop-color="#cfcfcf"/></linearGradient></defs>
<g clip-path="url(#c4)">
<rect x="1355" y="382" width="169" height="94" fill="url(#w4)"/>
<rect x="1355" y="382" width="44" height="94" fill="#b07a40" filter="url(#gb2)"/>
<rect x="1362" y="392" width="22" height="84" fill="#c08c50" filter="url(#gb4)"/>
<rect x="1384" y="390" width="12" height="86" fill="#8e6034" filter="url(#gb2)"/>
<rect x="1410" y="400" width="60" height="60" fill="#ececea" opacity="0.6" filter="url(#gb4)"/>
<ellipse cx="1514" cy="386" rx="12" ry="6" fill="#4a4c50" filter="url(#gb4)"/>
<ellipse cx="1453" cy="452" rx="21" ry="22" fill="#2a2220"/>
<path d="M1440 440 Q1448 418 1460 421 Q1472 428 1477 455 L1470 462 Q1466 440 1455 434Z" fill="#2a2220"/>
<ellipse cx="1455" cy="466" rx="15" ry="8" fill="#8a6a60" opacity="0.8"/>
<path d="M1458 476 Q1462 467 1478 467 Q1492 469 1498 476Z" fill="#e0652a"/>
</g></svg>
<div class="a" style="left:1359px;top:452px;width:117.7px;height:20px;border-radius:5px;background:rgba(40,40,42,0.6)"></div>
<svg style="left:1362px;top:455.5px" width="15" height="14" viewBox="0 0 15 14"><path d="M5 1 Q7.5 -0.5 10 1 V7 Q7.5 9.5 5 7Z" fill="#d9505c"/><path d="M3 5.5 Q3 10.5 7.5 10.5 Q12 10.5 12 5.5 M7.5 10.5 V13 M4.5 13 H10.5" fill="none" stroke="#d9505c" stroke-width="1.2"/><path d="M1 13 L14 1" stroke="#d9505c" stroke-width="1.5"/></svg>
<svg style="left:1402px;top:484px" width="76" height="84" viewBox="1402 484 76 84">
<defs><clipPath id="c5"><rect x="1402.4" y="484.7" width="74.5" height="82" rx="7"/></clipPath></defs>
<g clip-path="url(#c5)">
<rect x="1402" y="484" width="76" height="84" fill="#ebe9f1"/>
<path d="M1423 526 Q1419 510 1422 498 Q1426 486 1439 486 Q1452 486 1455 497 Q1458 510 1456 520 Q1460 527 1464 528 L1450 532 L1430 532 Q1424 530 1420 528Z" fill="#2a2022"/>
<path d="M1412 568 Q1414 534 1432 528 L1450 526 Q1468 532 1472 568Z" fill="#f4f4f2"/>
<path d="M1426 531 L1446 524 L1458 526 L1444 545 L1424 568 L1414 568 Q1416 548 1426 531Z" fill="#1d7652"/>
<ellipse cx="1439" cy="510" rx="9.5" ry="12" fill="#dfb3a2"/>
<path d="M1429 503 Q1432 494 1442 494 Q1450 496 1450 503 Q1442 498 1429 503Z" fill="#2a2022"/>
<ellipse cx="1439" cy="515" rx="4" ry="1.5" fill="#c97f7a"/>
</g></svg>
<div class="a" style="left:1359px;top:547px;width:127px;height:20.2px;border-radius:5px;background:rgba(48,48,50,0.82)"></div>
<svg style="left:1362px;top:550.5px" width="15" height="14" viewBox="0 0 15 14"><path d="M5 1 Q7.5 -0.5 10 1 V7 Q7.5 9.5 5 7Z" fill="#d9505c"/><path d="M3 5.5 Q3 10.5 7.5 10.5 Q12 10.5 12 5.5 M7.5 10.5 V13 M4.5 13 H10.5" fill="none" stroke="#d9505c" stroke-width="1.2"/><path d="M1 13 L14 1" stroke="#d9505c" stroke-width="1.5"/></svg>
<div class="a" style="left:1359px;top:640.6px;width:117.9px;height:20.2px;border-radius:5px;background:#26282b"></div>
<svg style="left:1362px;top:644px" width="15" height="14" viewBox="0 0 15 14"><path d="M5 1 Q7.5 -0.5 10 1 V7 Q7.5 9.5 5 7Z" fill="#d9505c"/><path d="M3 5.5 Q3 10.5 7.5 10.5 Q12 10.5 12 5.5 M7.5 10.5 V13 M4.5 13 H10.5" fill="none" stroke="#d9505c" stroke-width="1.2"/><path d="M1 13 L14 1" stroke="#d9505c" stroke-width="1.5"/></svg>
<div class="a" style="left:1359px;top:734.2px;width:112px;height:20.2px;border-radius:5px;background:#26282b"></div>
<div class="a" style="left:1400px;top:756px;width:77.6px;height:35px;border-radius:6px;background:#1d1f22"></div>
<svg style="left:1432px;top:768px" width="14" height="9" viewBox="0 0 14 9"><path d="M1 1.5 L7 7.5 L13 1.5" fill="none" stroke="#cfcfcf" stroke-width="1.6"/></svg>

<div class="a" style="left:0;top:797px;width:1600px;height:61px;background:#000"></div>
<svg style="left:40px;top:806px" width="30" height="28" viewBox="0 0 30 28"><path d="M11 8 Q11 2 15 2 Q19 2 19 8 V14 Q19 20 15 20 Q11 20 11 14Z" fill="none" stroke="#eee" stroke-width="1.5"/><path d="M7.5 12.5 Q7.5 23 15 23 Q22.5 23 22.5 12.5 M15 23 V27 M10.5 26.8 H19.5" fill="none" stroke="#eee" stroke-width="1.5"/><path d="M3 25.5 L27 2.5" stroke="#e8245a" stroke-width="2.6"/></svg>
<svg style="left:83px;top:816px" width="9" height="6" viewBox="0 0 9 6"><path d="M1 5 L4.5 1.5 L8 5" fill="none" stroke="#f0f0f0" stroke-width="1.6"/></svg>
<svg style="left:137px;top:806px" width="30" height="28" viewBox="0 0 30 28"><rect x="2" y="7" width="18" height="14" rx="2.5" fill="none" stroke="#eee" stroke-width="1.5"/><path d="M20 12 L27 7.5 V20.5 L20 16" fill="none" stroke="#eee" stroke-width="1.5"/><path d="M3 25.5 L27 2.5" stroke="#e8245a" stroke-width="2.6"/></svg>
<svg style="left:186px;top:816px" width="9" height="6" viewBox="0 0 9 6"><path d="M1 5 L4.5 1.5 L8 5" fill="none" stroke="#f0f0f0" stroke-width="1.6"/></svg>
<svg style="left:476px;top:810px" width="23" height="21" viewBox="0 0 23 21"><circle cx="7" cy="5" r="3.6" fill="none" stroke="#eee" stroke-width="1.5"/><circle cx="15.5" cy="9" r="3.6" fill="none" stroke="#eee" stroke-width="1.5"/><path d="M1.5 16 Q1.5 10.5 7 10.5 Q8.5 10.5 9.5 11" fill="none" stroke="#eee" stroke-width="1.5"/><path d="M9.5 19.8 Q9 14.5 15.5 14.5 Q21.5 14.5 21.5 18 Q21.5 19.8 19.5 19.8Z" fill="none" stroke="#eee" stroke-width="1.5"/></svg>
<svg style="left:538px;top:816px" width="9" height="6" viewBox="0 0 9 6"><path d="M1 5 L4.5 1.5 L8 5" fill="none" stroke="#f0f0f0" stroke-width="1.6"/></svg>
<svg style="left:589px;top:807px" width="27" height="25" viewBox="0 0 27 25"><path d="M8 5 Q8 1 12 1 H21 Q25.5 1 25.5 5.5 V11 Q25.5 14.5 22 15" fill="none" stroke="#eee" stroke-width="1.5"/><path d="M5 5.5 H16 Q20.5 5.5 20.5 10 V15 Q20.5 19 16 19 H9.5 L6 23.5 V19 H5 Q1.5 19 1.5 15 V9.5 Q1.5 5.5 5 5.5Z" fill="none" stroke="#eee" stroke-width="1.5"/><circle cx="7" cy="12.3" r="1.2" fill="#eee"/><circle cx="11" cy="12.3" r="1.2" fill="#eee"/><circle cx="15" cy="12.3" r="1.2" fill="#eee"/></svg>
<svg style="left:632px;top:816px" width="9" height="6" viewBox="0 0 9 6"><path d="M1 5 L4.5 1.5 L8 5" fill="none" stroke="#f0f0f0" stroke-width="1.6"/></svg>
<svg style="left:678px;top:810px" width="27" height="22" viewBox="0 0 27 22"><path d="M13.5 21 L3.5 11.5 Q0.5 8.5 1.5 5 Q3 1 7 1 Q11 1 13.5 5 Q16 1 20 1 Q24 1 25.5 5 Q26.5 8.5 23.5 11.5Z" fill="none" stroke="#eee" stroke-width="1.5" stroke-linejoin="round"/></svg>
<svg style="left:716px;top:816px" width="9" height="6" viewBox="0 0 9 6"><path d="M1 5 L4.5 1.5 L8 5" fill="none" stroke="#f0f0f0" stroke-width="1.6"/></svg>
<div class="a" style="left:771.5px;top:809.5px;width:25px;height:20px;border-radius:3px;background:#22d57b"></div>
<svg style="left:777px;top:812px" width="14" height="14" viewBox="0 0 14 14"><path d="M7 1.5 L12 6.5 H8.8 V12.5 H5.2 V6.5 H2Z" fill="#000"/></svg>
<svg style="left:860px;top:800px" width="40" height="36" viewBox="860 800 40 36"><defs><radialGradient id="aig" cx="0.45" cy="0.55" r="0.5"><stop offset="0" stop-color="#a8d8ec"/><stop offset="1" stop-color="#f4fafc"/></radialGradient></defs><path d="M883.2 809 Q885.6 817.6 894.4 820 Q885.6 822.4 883.2 831 Q880.8 822.4 872 820 Q880.8 817.6 883.2 809Z" fill="url(#aig)"/><path d="M892.2 807.8 Q893.2 810.8 896 811.6 Q893.2 812.4 892.2 815.4 Q891.2 812.4 888.4 811.6 Q891.2 810.8 892.2 807.8Z" fill="#eef6f8"/></svg>
<svg style="left:971px;top:806.5px" width="27" height="27" viewBox="0 0 27 27"><circle cx="13.5" cy="13.5" r="12" fill="none" stroke="#eee" stroke-width="1.6"/><circle cx="13.5" cy="8" r="1.6" fill="#eee"/><path d="M11 11.5 H14.3 V19 M10.5 19.5 H17" fill="none" stroke="#eee" stroke-width="1.8"/></svg>
<svg style="left:1065px;top:807px" width="25" height="24" viewBox="0 0 25 24"><path d="M1.5 9 V5 Q1.5 1.5 5 1.5 H9 M9.5 22 H5 Q1.5 22 1.5 18.5" fill="none" stroke="#eee" stroke-width="1.6"/><path d="M23 14.5 V18.5 Q23 22 19.5 22 H15.5" fill="none" stroke="#eee" stroke-width="1.6"/><circle cx="18.5" cy="6" r="4.3" fill="none" stroke="#eee" stroke-width="1.6"/><circle cx="6" cy="17.5" r="4.3" fill="none" stroke="#eee" stroke-width="1.6"/></svg>
<svg style="left:1147.5px;top:806.5px" width="27" height="27" viewBox="0 0 27 27"><circle cx="13.5" cy="13.5" r="12" fill="none" stroke="#eee" stroke-width="1.6"/><circle cx="13.5" cy="13.5" r="5.3" fill="#f2f2f2"/></svg>
<svg style="left:1232px;top:806.5px" width="27" height="27" viewBox="0 0 27 27"><circle cx="13.5" cy="13.5" r="12" fill="none" stroke="#eee" stroke-width="1.6"/><circle cx="8.3" cy="13.5" r="1.5" fill="#eee"/><circle cx="13.5" cy="13.5" r="1.5" fill="#eee"/><circle cx="18.7" cy="13.5" r="1.5" fill="#eee"/></svg>
<svg style="left:1530px;top:800px" width="40" height="40" viewBox="1530 800 40 40"><path d="M1546.5 807.6 H1561.8 V826.5 L1555 832.2 V811.5 L1561.8 807.6" fill="none" stroke="#e8245a" stroke-width="1.5" stroke-linejoin="round"/><circle cx="1546" cy="813.4" r="3.4" fill="none" stroke="#f2f2f2" stroke-width="1.5"/><path d="M1542.5 818.5 Q1546 816.8 1549.5 818.2 L1552.2 822 Q1552.6 823.6 1551 823.6 L1550 823 L1550.5 830.5 Q1550.5 832.6 1548.6 832.6 Q1547.4 832.6 1547 831 L1546 827.5 L1542.6 832 Q1541 833.2 1539.8 832.3 Q1538.6 831.3 1539.6 829.6 L1542.5 825 L1542.5 822.5 Q1539.5 823.6 1538.6 822.6 Q1538 821.4 1539.5 820.3Z" fill="none" stroke="#f2f2f2" stroke-width="1.4" stroke-linejoin="round"/></svg>

<div class="a" style="left:0;top:858px;width:1600px;height:42px;background:#d3d6e2"></div>
<div class="a" style="left:0;top:858px;width:1600px;height:1px;background:#9aa0a8"></div>
<div class="a" style="left:50.6px;top:859px;width:299px;height:40px;background:#ffffff"></div>
<svg style="left:17px;top:871px" width="17" height="17" viewBox="0 0 17 17"><path d="M0 2.3 L7 1.3 V8 H0Z M8 1.1 L16.5 0 V8 H8Z M0 9 H7 V15.7 L0 14.7Z M8 9 H16.5 V17 L8 15.9Z" fill="#111"/></svg>
<svg style="left:62px;top:870.5px" width="18" height="18" viewBox="0 0 18 18"><circle cx="10.5" cy="7" r="5.5" fill="none" stroke="#222" stroke-width="1.5"/><path d="M6.5 11 L1 16.5" stroke="#222" stroke-width="1.6"/></svg>
<svg style="left:365px;top:870px" width="19" height="18" viewBox="0 0 19 18"><rect x="3" y="3.5" width="9" height="10" fill="none" stroke="#222" stroke-width="1.4"/><path d="M0.5 2 H14.5 M0.5 15.5 H14.5" stroke="#222" stroke-width="1.4"/><path d="M17 1 V4 M17 7 V11 M17 14 V17" stroke="#222" stroke-width="1.6"/></svg>
<svg style="left:415px;top:866px" width="28" height="25" viewBox="0 0 28 25"><defs><linearGradient id="cp1" x1="0" y1="0" x2="0" y2="1"><stop offset="0" stop-color="#1f8fe6"/><stop offset="0.55" stop-color="#38c070"/><stop offset="1" stop-color="#f0c400"/></linearGradient><linearGradient id="cp2" x1="0" y1="0" x2="0" y2="1"><stop offset="0" stop-color="#c04ad8"/><stop offset="0.5" stop-color="#ff5a8a"/><stop offset="1" stop-color="#ff7a20"/></linearGradient></defs><path d="M5 2 H15 L9 18 Q8 20 6 20 H3.5 Q1 20 1.5 17 L3 5 Q3.5 2 5 2Z" fill="url(#cp1)"/><path d="M13 6 H24 Q26.5 6 26 9 L24.5 20 Q24 23 21.5 23 H11.5 Q9.5 23 10.5 20.5Z" fill="url(#cp2)"/><path d="M12.5 2 H15.5 Q17.5 2.5 17 5 L15.5 9 L13 6Z" fill="#1a4ed0"/></svg>
<svg style="left:466px;top:865px" width="28" height="27" viewBox="0 0 28 27"><defs><linearGradient id="ed" x1="0.1" y1="0.9" x2="0.9" y2="0.1"><stop offset="0" stop-color="#0a4fb0"/><stop offset="0.5" stop-color="#1a90e0"/><stop offset="1" stop-color="#40e080"/></linearGradient></defs><circle cx="13.5" cy="13.5" r="12.8" fill="url(#ed)"/><path d="M9 17 Q9 11 15 11 Q20 11 21 15 Q18 13 15 14 Q12 15 13 18 Q15 21 21 21 Q25 21 26 19 Q24 25 17 26 Q9 26 9 17Z" fill="#0d57b8"/><ellipse cx="16.8" cy="15.6" rx="3.6" ry="2.4" fill="#d3d6e2"/></svg>
<svg style="left:519px;top:867px" width="25" height="23" viewBox="0 0 25 23"><path d="M1 3 Q1 1 3 1 H9 L11.5 3.5 H22 Q24 3.5 24 5.5 V20 Q24 22 22 22 H3 Q1 22 1 20Z" fill="#f0b731"/><path d="M1 7 H24 V20 Q24 22 22 22 H3 Q1 22 1 20Z" fill="#fcd258"/><rect x="7" y="14" width="11" height="8" fill="#2a78d0"/><rect x="10.5" y="17" width="4" height="5" fill="#fcd258"/></svg>
<svg style="left:570px;top:867px" width="27" height="24" viewBox="0 0 27 24"><path d="M9 3 H24 Q26 3 26 5 V19 Q26 21 24 21 H9Z" fill="#2b9be8"/><path d="M9 10 L26 10 V19 Q26 21 24 21 H9Z" fill="#58c0f8"/><path d="M9 10 L17.5 16 L26 10" fill="none" stroke="#1570c0" stroke-width="1.2"/><rect x="1" y="6" width="13" height="13" rx="2" fill="#0f5fb8"/><circle cx="7.5" cy="12.5" r="3.6" fill="none" stroke="#fff" stroke-width="1.8"/></svg>
<svg style="left:622px;top:865px" width="29" height="27" viewBox="0 0 29 27"><circle cx="12.5" cy="12.5" r="11.5" fill="#db4437"/><path d="M12.5 12.5 L2.5 6.8 A11.5 11.5 0 0 0 12.5 24 Z" fill="#0f9d58"/><path d="M12.5 12.5 L12.5 24 A11.5 11.5 0 0 0 22.5 6.8Z" fill="#f4b400"/><circle cx="12.5" cy="12.5" r="5" fill="#fff"/><circle cx="12.5" cy="12.5" r="3.8" fill="#4285f4"/><circle cx="20" cy="19" r="7" fill="#b0361f"/><text x="16.3" y="22.8" font-family="Liberation Sans" font-size="9.5" fill="#fff">M</text></svg>
<svg style="left:675px;top:865px" width="29" height="27" viewBox="0 0 29 27"><path d="M11.5 1.5 Q21.5 1.5 21.5 11 Q21.5 20 11.5 20 L7 24 V19 Q1.5 17 1.5 11 Q1.5 1.5 11.5 1.5Z" fill="#7a5ad8"/><path d="M8 7 Q8 6 9 6 L10.5 6.5 L11 9 L10 10 Q11 12.5 13 13.5 L14 12.5 L16.5 13 L17 14.5 Q16.5 16 15 15.5 Q9 13.5 8 7Z" fill="#fff"/><circle cx="20" cy="19" r="7" fill="#f03a2e"/><text x="17" y="23" font-family="Liberation Sans" font-size="11" fill="#fff">2</text></svg>
<div class="a" style="left:714px;top:859px;width:47px;height:41px;background:#e8ebf0"></div>
<svg style="left:725px;top:866px" width="27" height="27" viewBox="0 0 27 27"><rect x="1" y="1" width="25" height="25" rx="10" fill="#1462e6"/><text x="5.3" y="15.5" font-family="Liberation Sans" font-size="6.5" fill="#fff">zoom</text></svg>
<div class="a" style="left:614px;top:897.5px;width:43px;height:2.5px;background:#2a78c8"></div>
<div class="a" style="left:666px;top:897.5px;width:42px;height:2.5px;background:#2a78c8"></div>
<div class="a" style="left:714px;top:897.5px;width:47px;height:2.5px;background:#2a78c8"></div>
<svg style="left:1114px;top:866px" width="27" height="25" viewBox="0 0 27 25"><circle cx="10" cy="13" r="9" fill="#f6a21e"/><path d="M7 22 Q3 22 3 18.5 Q3 15 7 15 Q8 11.5 12 11.5 Q16 11.5 17 15 Q21 15 21 18.5 Q21 22 17 22Z" fill="#d8e2f0"/><circle cx="18" cy="6" r="5.5" fill="#e8342a"/><text x="15.8" y="9.2" font-family="Liberation Sans" font-size="8" fill="#fff">1</text></svg>
<svg style="left:1291px;top:873px" width="14" height="9" viewBox="0 0 14 9"><path d="M1 8 L7 1.5 L13 8" fill="none" stroke="#222" stroke-width="1.3"/></svg>
<svg style="left:1316px;top:869px" width="16" height="18" viewBox="0 0 16 18"><rect x="1" y="4" width="10" height="10" rx="2" fill="none" stroke="#333" stroke-width="1.2"/><path d="M11 7.5 L15 5.5 V12.5 L11 10.5" fill="none" stroke="#333" stroke-width="1.2"/><path d="M3 1.5 Q6 0 9 1.5 M3 16.5 Q6 18 9 16.5" fill="none" stroke="#333" stroke-width="1"/></svg>
<svg style="left:1342px;top:868px" width="12" height="19" viewBox="0 0 12 19"><rect x="2.5" y="0.5" width="7" height="12" rx="3.5" fill="#222"/><path d="M1 9 Q1 14.5 6 14.5 Q11 14.5 11 9 M6 14.5 V17.5 M3 18 H9" fill="none" stroke="#222" stroke-width="1.2"/></svg>
<svg style="left:1365px;top:872px" width="17" height="12" viewBox="0 0 17 12"><rect x="1" y="2.5" width="13" height="8.5" fill="none" stroke="#333" stroke-width="1.2"/><rect x="3" y="4.5" width="8" height="4.5" fill="#333"/><path d="M14.5 5 H16 V8.5 H14.5" fill="#333"/><path d="M2 0.5 L5 2" stroke="#333"/></svg>
<svg style="left:1391px;top:870px" width="16" height="16" viewBox="0 0 16 16"><path d="M1 15 A14 14 0 0 1 15 1 M4 15 A11 11 0 0 1 15 4 M7 15 A8 8 0 0 1 15 7 M10 15 A5 5 0 0 1 15 10" fill="none" stroke="#555" stroke-width="1.1"/><circle cx="14" cy="14" r="1.4" fill="#222"/></svg>
<svg style="left:1414px;top:870px" width="19" height="16" viewBox="0 0 19 16"><path d="M1 5 H4 L8.5 1.5 V14.5 L4 11 H1Z" fill="none" stroke="#333" stroke-width="1.2"/><path d="M11 5.5 Q12.5 8 11 10.5 M13.5 3.5 Q16 8 13.5 12.5 M16 1.5 Q19.5 8 16 14.5" fill="none" stroke="#333" stroke-width="1.1"/></svg>
<svg style="left:1556px;top:870px" width="28" height="26" viewBox="0 0 28 26"><path d="M1.5 1.5 H18 V14 H8 L4 18 V14 H1.5Z" fill="#151515"/><path d="M4.5 5 H15 M4.5 8 H15 M4.5 11 H12" stroke="#d8d8d8" stroke-width="1"/><circle cx="18" cy="16.5" r="7.2" fill="#d3d7df" stroke="#777" stroke-width="1.1"/><path d="M17 12.5 L19 11.8 V21" fill="none" stroke="#222" stroke-width="1.5"/></svg>
<div class="a" style="left:1594.5px;top:859px;width:1px;height:41px;background:#aab0b8"></div>

<div class="a" style="left:1269.5px;top:405px;width:5px;height:42px;border-radius:1px;background:#7c7e80"></div>
<div class="t" style="left:16.45px;top:7.17px;font-size:13.50px;color:#fff;transform:scaleX(1.012);-webkit-text-stroke:0.5px #fff;">zoom</div>
<div class="t" style="left:17.00px;top:21.60px;font-size:15.36px;color:#fff;transform:scaleX(1.087);-webkit-text-stroke:0.35px #fff;">Workplace</div>
<div class="t" style="left:204.94px;top:18.77px;font-size:13.27px;color:#d6d6d6;">Meeting</div>
<div class="t" style="left:475.90px;top:19.40px;font-size:12.29px;color:#e4e4e4;transform:scaleX(1.019);">Ольга Кононенко's screen</div>
<div class="t" style="left:1379.50px;top:15.96px;font-size:12.57px;color:#e8e8e8;">View</div>
<div class="t" style="left:541.00px;top:101.38px;font-size:10.89px;color:#fbeee9;transform:scaleX(1.012);-webkit-text-stroke:0.15px #fbeee9;">Лекція Науковий стиль&nbsp;&nbsp;-&nbsp;&nbsp;PowerPoint</div>
<div class="t" style="left:963.30px;top:101.58px;font-size:10.89px;color:#fbeee9;transform:scaleX(1.037);-webkit-text-stroke:0.15px #fbeee9;">Ольга Кононенко</div>
<div class="t" style="left:1065.56px;top:100.45px;font-size:11.87px;color:#8a8a8a;transform:scaleX(0.934);">OK</div>
<div class="t" style="left:19.42px;top:131.91px;font-size:11.45px;color:#fbeee9;transform:scaleX(1.005);-webkit-text-stroke:0.25px #fbeee9;">Файл</div>
<div class="t" style="left:142.13px;top:131.91px;font-size:11.45px;color:#fbeee9;transform:scaleX(0.947);-webkit-text-stroke:0.25px #fbeee9;">Вставлення</div>
<div class="t" style="left:224.82px;top:131.91px;font-size:11.45px;color:#fbeee9;transform:scaleX(1.016);-webkit-text-stroke:0.25px #fbeee9;">Конструктор</div>
<div class="t" style="left:314.86px;top:131.91px;font-size:11.45px;color:#fbeee9;transform:scaleX(0.971);-webkit-text-stroke:0.25px #fbeee9;">Переходи</div>
<div class="t" style="left:390.00px;top:131.91px;font-size:11.45px;color:#fbeee9;transform:scaleX(0.992);-webkit-text-stroke:0.25px #fbeee9;">Анімація</div>
<div class="t" style="left:459.62px;top:131.91px;font-size:11.45px;color:#fbeee9;transform:scaleX(0.957);-webkit-text-stroke:0.25px #fbeee9;">Показ слайдів</div>
<div class="t" style="left:555.12px;top:131.91px;font-size:11.45px;color:#fbeee9;transform:scaleX(0.958);-webkit-text-stroke:0.25px #fbeee9;">Рецензування</div>
<div class="t" style="left:650.10px;top:131.91px;font-size:11.45px;color:#fbeee9;transform:scaleX(0.986);-webkit-text-stroke:0.25px #fbeee9;">Подання</div>
<div class="t" style="left:720.00px;top:131.91px;font-size:11.45px;color:#fbeee9;transform:scaleX(0.940);-webkit-text-stroke:0.25px #fbeee9;">Довідка</div>
<div class="t" style="left:808.43px;top:131.91px;font-size:11.45px;color:#fbeee9;transform:scaleX(0.992);-webkit-text-stroke:0.25px #fbeee9;">Скажіть, що потрібно зробити</div>
<div class="t" style="left:1158.44px;top:131.91px;font-size:11.45px;color:#fbeee9;transform:scaleX(0.973);-webkit-text-stroke:0.25px #fbeee9;">Спільний доступ</div>
<div class="t" style="left:74.06px;top:131.45px;font-size:11.87px;color:#8c5a4e;transform:scaleX(0.928);-webkit-text-stroke:0.2px #8c5a4e;">Основне</div>
<div class="t" style="left:15.45px;top:191.58px;font-size:10.89px;color:#a9a9a9;transform:scaleX(0.972);">Вставити</div>
<div class="t" style="left:12.91px;top:224.08px;font-size:10.89px;color:#4a4a4a;transform:scaleX(0.969);-webkit-text-stroke:0.2px #4a4a4a;">Буфер обміну</div>
<div class="t" style="left:112.20px;top:191.38px;font-size:10.89px;color:#444444;transform:scaleX(1.016);-webkit-text-stroke:0.2px #444;">Створити</div>
<div class="t" style="left:118.34px;top:206.38px;font-size:10.89px;color:#444444;transform:scaleX(0.951);-webkit-text-stroke:0.2px #444;">слайд</div>
<div class="t" style="left:183.15px;top:160.33px;font-size:10.89px;color:#444444;transform:scaleX(0.971);-webkit-text-stroke:0.2px #444;">Макет</div>
<div class="t" style="left:183.44px;top:181.58px;font-size:10.89px;color:#444444;transform:scaleX(1.026);-webkit-text-stroke:0.2px #444;">Скинути</div>
<div class="t" style="left:183.13px;top:203.08px;font-size:10.89px;color:#444444;-webkit-text-stroke:0.2px #444;">Розділ</div>
<div class="t" style="left:152.48px;top:224.08px;font-size:10.89px;color:#4a4a4a;transform:scaleX(0.946);-webkit-text-stroke:0.2px #4a4a4a;">Слайди</div>
<div class="t" style="left:337.11px;top:224.08px;font-size:10.89px;color:#4a4a4a;transform:scaleX(1.018);-webkit-text-stroke:0.2px #4a4a4a;">Шрифт</div>
<div class="t" style="left:557.00px;top:224.08px;font-size:10.89px;color:#4a4a4a;transform:scaleX(0.990);-webkit-text-stroke:0.2px #4a4a4a;">Абзац</div>
<div class="t" style="left:812.78px;top:191.83px;font-size:10.89px;color:#444444;transform:scaleX(1.022);-webkit-text-stroke:0.2px #444;">Упорядкувати</div>
<div class="t" style="left:887.10px;top:191.83px;font-size:10.89px;color:#a9a9a9;transform:scaleX(1.032);">Експрес-</div>
<div class="t" style="left:894.06px;top:206.38px;font-size:10.89px;color:#a9a9a9;transform:scaleX(1.013);">стилі</div>
<div class="t" style="left:955.67px;top:160.33px;font-size:10.89px;color:#a9a9a9;transform:scaleX(1.017);">Заливка фігури</div>
<div class="t" style="left:955.09px;top:181.58px;font-size:10.89px;color:#a9a9a9;transform:scaleX(1.041);">Контур фігури</div>
<div class="t" style="left:955.15px;top:203.08px;font-size:10.89px;color:#a9a9a9;transform:scaleX(0.973);">Ефекти для фігур</div>
<div class="t" style="left:830.14px;top:224.08px;font-size:10.89px;color:#4a4a4a;transform:scaleX(0.985);-webkit-text-stroke:0.2px #4a4a4a;">Малювання</div>
<div class="t" style="left:1091.17px;top:160.58px;font-size:10.89px;color:#444444;transform:scaleX(1.022);-webkit-text-stroke:0.2px #444;">Знайти</div>
<div class="t" style="left:1091.16px;top:181.58px;font-size:10.89px;color:#444444;transform:scaleX(1.041);-webkit-text-stroke:0.2px #444;">Замінити</div>
<div class="t" style="left:1090.62px;top:202.58px;font-size:10.89px;color:#444444;transform:scaleX(1.011);-webkit-text-stroke:0.2px #444;">Виділити</div>
<div class="t" style="left:1082.76px;top:223.58px;font-size:10.89px;color:#4a4a4a;transform:scaleX(0.966);-webkit-text-stroke:0.2px #4a4a4a;">Редагування</div>
<div class="t" style="left:31.62px;top:255.08px;font-size:10.89px;color:#5a5a5a;transform:scaleX(1.012);-webkit-text-stroke:0.15px #5a5a5a;">Розділ за замовчуванням</div>
<div class="t" style="left:17.12px;top:274.86px;font-size:12.57px;color:#606060;">1</div>
<div class="t" style="left:17.37px;top:363.76px;font-size:12.57px;color:#606060;">2</div>
<div class="t" style="left:17.62px;top:452.06px;font-size:12.57px;color:#d9572f;">3</div>
<div class="t" style="left:17.75px;top:540.86px;font-size:12.57px;color:#606060;">4</div>
<div class="t" style="left:17.50px;top:628.36px;font-size:12.57px;color:#606060;">5</div>
<div class="t" style="left:14.00px;top:726.37px;font-size:10.20px;color:#5a5a5a;transform:scaleX(0.973);-webkit-text-stroke:0.2px #5a5a5a;">Слайд 3 з 28</div>
<div class="t" style="left:118.60px;top:726.43px;font-size:10.47px;color:#444;transform:scaleX(1.024);-webkit-text-stroke:0.2px #444;">українська</div>
<div class="t" style="left:809.48px;top:726.43px;font-size:10.47px;color:#444;transform:scaleX(1.094);-webkit-text-stroke:0.2px #444;">Нотатки</div>
<div class="t" style="left:884.07px;top:726.43px;font-size:10.47px;color:#444;transform:scaleX(1.108);-webkit-text-stroke:0.2px #444;">Примітки</div>
<div class="t" style="left:1215.10px;top:726.43px;font-size:10.47px;color:#666;transform:scaleX(0.963);">72%</div>
<div class="t" style="left:317.57px;top:249.48px;font-size:26.96px;font-weight:bold;color:#262d3b;transform:scaleX(1.196);-webkit-text-stroke:1px #262d3b;">1.&nbsp; Загальна&nbsp; характеристика&nbsp; та&nbsp; особливості</div>
<div class="t" style="left:317.07px;top:283.88px;font-size:26.96px;font-weight:bold;color:#262d3b;transform:scaleX(1.193);-webkit-text-stroke:1px #262d3b;">науково-освітнього мережевого дискурсу</div>
<div class="t" style="left:334.40px;top:390.00px;font-size:36.03px;font-weight:bold;color:#262d3b;transform:scaleX(1.113);-webkit-text-stroke:1.3px #262d3b;">СТИЛЬ</div>
<div class="t" style="left:333.50px;top:556.59px;font-size:35.34px;font-weight:bold;color:#262d3b;transform:scaleX(1.114);-webkit-text-stroke:1px #262d3b;">ДИСКУРС</div>
<div class="t" style="left:333.43px;top:457.76px;font-size:17.18px;color:#222;transform:scaleX(1.036);">(текст на папері; як?)</div>
<div class="t" style="left:331.13px;top:635.46px;font-size:17.18px;color:#222;transform:scaleX(1.040);">(текст, занурений у життя;</div>
<div class="t" style="left:332.02px;top:655.46px;font-size:17.18px;color:#222;transform:scaleX(1.032);">хто, кому, де, навіщо і в яких умовах?)</div>
<div class="t" style="left:765.82px;top:333.35px;font-size:16.48px;color:#3b3f4c;transform:scaleX(1.075);-webkit-text-stroke:0.1px #3b3f4c;">Жива взаємодія</div>
<div class="t" style="left:596.00px;top:375.05px;font-size:16.48px;color:#3b3f4c;transform:scaleX(1.075);-webkit-text-stroke:0.1px #3b3f4c;">Динамічна подія</div>
<div class="t" style="left:974.54px;top:365.75px;font-size:16.48px;color:#3b3f4c;transform:scaleX(1.105);-webkit-text-stroke:0.1px #3b3f4c;">Гнучкість</div>
<div class="t" style="left:715.54px;top:415.45px;font-size:16.48px;color:#3b3f4c;transform:scaleX(1.074);-webkit-text-stroke:0.1px #3b3f4c;">Обмежений мовними нормами</div>
<div class="t" style="left:1048.56px;top:435.95px;font-size:16.48px;color:#3b3f4c;transform:scaleX(1.090);-webkit-text-stroke:0.1px #3b3f4c;">Емоції</div>
<div class="t" style="left:816.61px;top:450.65px;font-size:16.48px;color:#3b3f4c;transform:scaleX(1.080);-webkit-text-stroke:0.1px #3b3f4c;">Складні речення</div>
<div class="t" style="left:713.05px;top:469.80px;font-size:16.48px;color:#3b3f4c;transform:scaleX(1.076);-webkit-text-stroke:0.1px #3b3f4c;">Терміни</div>
<div class="t" style="left:807.75px;top:486.30px;font-size:16.48px;color:#3b3f4c;transform:scaleX(1.065);-webkit-text-stroke:0.1px #3b3f4c;">Текст статичний</div>
<div class="t" style="left:575.65px;top:494.05px;font-size:16.48px;color:#3b3f4c;transform:scaleX(1.071);-webkit-text-stroke:0.1px #3b3f4c;">Учасники</div>
<div class="t" style="left:1037.91px;top:498.05px;font-size:16.48px;color:#3b3f4c;transform:scaleX(1.058);-webkit-text-stroke:0.1px #3b3f4c;">Мета</div>
<div class="t" style="left:700.77px;top:513.05px;font-size:16.48px;color:#3b3f4c;transform:scaleX(1.081);-webkit-text-stroke:0.1px #3b3f4c;">Відсутність емоцій</div>
<div class="t" style="left:724.58px;top:553.05px;font-size:16.48px;color:#3b3f4c;transform:scaleX(1.078);-webkit-text-stroke:0.1px #3b3f4c;">Мова та норми консервативні</div>
<div class="t" style="left:634.52px;top:575.55px;font-size:16.48px;color:#3b3f4c;transform:scaleX(1.071);-webkit-text-stroke:0.1px #3b3f4c;">Жести</div>
<div class="t" style="left:1000.59px;top:581.55px;font-size:16.48px;color:#3b3f4c;transform:scaleX(1.069);-webkit-text-stroke:0.1px #3b3f4c;">Контекст</div>
<div class="t" style="left:808.00px;top:586.25px;font-size:16.48px;color:#3b3f4c;transform:scaleX(1.067);-webkit-text-stroke:0.1px #3b3f4c;">Логічність</div>
<div class="t" style="left:668.37px;top:633.05px;font-size:16.48px;color:#3b3f4c;transform:scaleX(1.071);-webkit-text-stroke:0.1px #3b3f4c;">Зворотній зв’язок</div>
<div class="t" style="left:743.29px;top:663.55px;font-size:16.48px;color:#3b3f4c;transform:scaleX(1.073);-webkit-text-stroke:0.1px #3b3f4c;">Охоплює позамовні чинники</div>
<div class="t" style="left:1362.00px;top:176.12px;font-size:12.85px;color:#ececec;transform:scaleX(1.042);">Viktoriia Herman</div>
<div class="t" style="left:1419.99px;top:220.91px;font-size:40.50px;color:#fff;transform:scaleX(1.115);">M</div>
<div class="t" style="left:1381.12px;top:269.95px;font-size:11.87px;color:#ececec;transform:scaleX(1.134);">Марія Прокопенко</div>
<div class="t" style="left:1361.47px;top:363.75px;font-size:11.87px;color:#ececec;transform:scaleX(1.119);">Ольга Кононенко</div>
<div class="t" style="left:1381.74px;top:456.95px;font-size:11.87px;color:#ececec;transform:scaleX(1.112);">Yulia Andrienko</div>
<div class="t" style="left:1380.97px;top:551.65px;font-size:11.87px;color:#ececec;transform:scaleX(1.079);">Наталія Громова</div>
<div class="t" style="left:1369.93px;top:608.11px;font-size:16.76px;font-weight:bold;color:#f2f2f2;transform:scaleX(1.067);">Бокатова Аліна</div>
<div class="t" style="left:1380.98px;top:645.25px;font-size:11.87px;color:#ececec;transform:scaleX(1.073);">Бокатова Аліна</div>
<div class="t" style="left:1360.56px;top:700.41px;font-size:16.76px;font-weight:bold;color:#f2f2f2;transform:scaleX(1.101);">Ольга Кононенко</div>
<div class="t" style="left:1362.47px;top:739.25px;font-size:11.87px;color:#ececec;transform:scaleX(1.107);">Ольга Кононенко</div>
<div class="t" style="left:37.76px;top:838.72px;font-size:12.85px;font-weight:bold;color:#f4f4f4;transform:scaleX(0.930);">Audio</div>
<div class="t" style="left:135.60px;top:838.72px;font-size:12.85px;font-weight:bold;color:#f4f4f4;transform:scaleX(0.946);">Video</div>
<div class="t" style="left:453.80px;top:838.72px;font-size:12.85px;font-weight:bold;color:#f4f4f4;transform:scaleX(0.913);">Participants</div>
<div class="t" style="left:589.52px;top:838.72px;font-size:12.85px;font-weight:bold;color:#f4f4f4;transform:scaleX(0.937);">Chat</div>
<div class="t" style="left:675.56px;top:838.72px;font-size:12.85px;font-weight:bold;color:#f4f4f4;transform:scaleX(0.899);">React</div>
<div class="t" style="left:768.01px;top:838.72px;font-size:12.85px;font-weight:bold;color:#f4f4f4;transform:scaleX(0.925);">Share</div>
<div class="t" style="left:844.36px;top:838.72px;font-size:12.85px;font-weight:bold;color:#f4f4f4;transform:scaleX(0.925);">AI Companion</div>
<div class="t" style="left:947.25px;top:838.72px;font-size:12.85px;font-weight:bold;color:#f4f4f4;transform:scaleX(0.976);">Meeting info</div>
<div class="t" style="left:1063.17px;top:838.72px;font-size:12.85px;font-weight:bold;color:#f4f4f4;transform:scaleX(0.895);">Apps</div>
<div class="t" style="left:1139.99px;top:838.72px;font-size:12.85px;font-weight:bold;color:#f4f4f4;transform:scaleX(0.922);">Record</div>
<div class="t" style="left:1229.93px;top:838.72px;font-size:12.85px;font-weight:bold;color:#f4f4f4;">More</div>
<div class="t" style="left:1532.31px;top:838.72px;font-size:12.85px;font-weight:bold;color:#f4f4f4;transform:scaleX(0.889);">Leave</div>
<div class="t" style="left:504.82px;top:812.35px;font-size:12.29px;font-weight:bold;color:#bdbdbd;transform:scaleX(0.924);">14</div>
<div class="t" style="left:91.21px;top:872.37px;font-size:14.80px;color:#333;transform:scaleX(1.089);">Пошук</div>
<div class="t" style="left:1146.49px;top:872.50px;font-size:15.36px;color:#222;transform:scaleX(0.880);">0°C</div>
<div class="t" style="left:1177.54px;top:872.50px;font-size:15.36px;color:#222;transform:scaleX(0.982);">Mostly sunny</div>
<div class="t" style="left:1442.76px;top:873.53px;font-size:12.01px;color:#222;transform:scaleX(1.008);">УКР</div>
<div class="t" style="left:1497.03px;top:864.11px;font-size:11.45px;color:#222;transform:scaleX(1.023);">8:05</div>
<div class="t" style="left:1479.79px;top:883.31px;font-size:11.45px;color:#222;transform:scaleX(1.014);">16.03.2026</div>
<svg style="left:150px;top:210px" width="6" height="4" viewBox="0 0 6 4"><path d="M0.5 0.5 H5.5 L3 3Z" fill="#444444" opacity="0.8"/></svg>
<svg style="left:216px;top:164.5px" width="6" height="4" viewBox="0 0 6 4"><path d="M0.5 0.5 H5.5 L3 3Z" fill="#444444" opacity="0.8"/></svg>
<svg style="left:218px;top:207px" width="6" height="4" viewBox="0 0 6 4"><path d="M0.5 0.5 H5.5 L3 3Z" fill="#444444" opacity="0.8"/></svg>
<svg style="left:922px;top:210px" width="6" height="4" viewBox="0 0 6 4"><path d="M0.5 0.5 H5.5 L3 3Z" fill="#a9a9a9" opacity="0.8"/></svg>
<svg style="left:1037px;top:164.5px" width="6" height="4" viewBox="0 0 6 4"><path d="M0.5 0.5 H5.5 L3 3Z" fill="#a9a9a9" opacity="0.8"/></svg>
<svg style="left:1031px;top:186px" width="6" height="4" viewBox="0 0 6 4"><path d="M0.5 0.5 H5.5 L3 3Z" fill="#a9a9a9" opacity="0.8"/></svg>
<svg style="left:1045px;top:207px" width="6" height="4" viewBox="0 0 6 4"><path d="M0.5 0.5 H5.5 L3 3Z" fill="#a9a9a9" opacity="0.8"/></svg>
<svg style="left:1147px;top:186px" width="6" height="4" viewBox="0 0 6 4"><path d="M0.5 0.5 H5.5 L3 3Z" fill="#444444" opacity="0.8"/></svg>
<svg style="left:1139px;top:207px" width="6" height="4" viewBox="0 0 6 4"><path d="M0.5 0.5 H5.5 L3 3Z" fill="#444444" opacity="0.8"/></svg>
</body></html>
